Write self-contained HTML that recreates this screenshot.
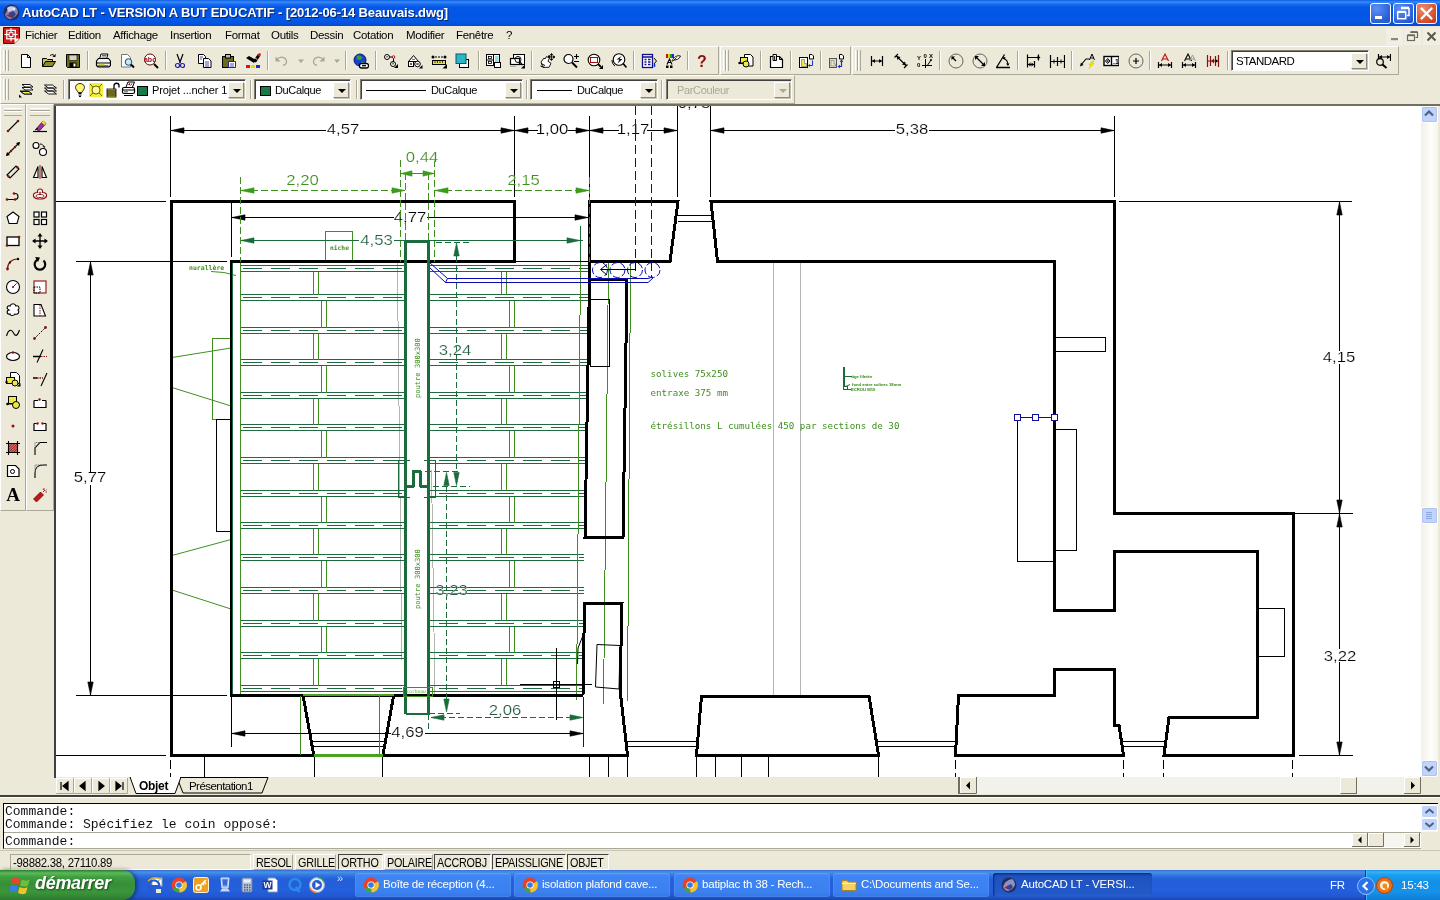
<!DOCTYPE html>
<html lang="fr">
<head>
<meta charset="utf-8">
<title>AutoCAD LT - VERSION A BUT EDUCATIF - [2012-06-14 Beauvais.dwg]</title>
<style>
*{box-sizing:border-box;margin:0;padding:0}
html,body{width:1440px;height:900px;overflow:hidden;background:#ece9d8;font-family:"Liberation Sans",sans-serif;font-size:11px;color:#000}
.abs{position:absolute}
#app{position:relative;width:1440px;height:900px;overflow:hidden;background:#ece9d8;will-change:transform}
/* title bar */
#title{left:0;top:0;width:1440px;height:26px;background:linear-gradient(#0a5fe8 0,#3c8af2 2px,#1b6cf0 4px,#0458e8 7px,#0355e5 14px,#0458e6 20px,#0455df 23px,#0349cc 26px)}
#title .txt{left:22px;top:5px;color:#fff;font-weight:bold;font-size:13px;letter-spacing:-0.13px;white-space:nowrap;text-shadow:1px 1px 0 #0a246a}
.tb{top:3px;width:21px;height:21px;border:1px solid #fff;border-radius:3px;background:radial-gradient(circle at 30% 25%,#5c91f4,#2b5fd8 70%,#2351c6)}
.tb.close{background:radial-gradient(circle at 30% 25%,#ee8d6e,#d8502c 65%,#b5371a)}
/* menu bar */
#menu{left:0;top:26px;width:1440px;height:20px;background:#ece9d8}
#menu span{position:absolute;top:3px;font-size:11.5px;white-space:nowrap;letter-spacing:-0.32px}
/* toolbars */
.tbar{background:#ece9d8;border-top:1px solid #fff;border-left:1px solid #fff;border-right:1px solid #aca899;border-bottom:1px solid #aca899}
.grip{position:absolute;top:3px;width:3px;bottom:3px;border-left:1px solid #fff;border-right:1px solid #aca899}
.hgrip{position:absolute;left:3px;right:3px;height:3px;border-top:1px solid #fff;border-bottom:1px solid #aca899}
.hgrip:after{content:'';position:absolute;left:0;right:0;top:2px;height:3px;border-top:1px solid #fff;border-bottom:1px solid #aca899}
.sep{position:absolute;top:4px;bottom:4px;width:2px;border-left:1px solid #aca899;border-right:1px solid #fff}
.ico{position:absolute;width:16px;height:16px}
.combo{position:absolute;height:21px;background:#fff;border:1px solid;border-color:#7f7d70 #fff #fff #7f7d70;box-shadow:inset 1px 1px 0 #404040}
.combo .btn{position:absolute;right:1px;top:2px;bottom:1px;width:16px;background:#ece9d8;border:1px solid;border-color:#fff #8d8a7c #8d8a7c #fff;box-shadow:1px 1px 0 #c5c2b2}
.combo .btn:after{content:"";position:absolute;left:4px;top:6px;border:4px solid transparent;border-top:4px solid #000;border-bottom:0}
.combo .t{position:absolute;top:4px;font-size:11px;letter-spacing:-0.35px;white-space:nowrap}
.combo.dis{background:#ece9d8}
.combo.dis .t{color:#aca899}
.combo.dis .btn:after{border-top-color:#aca899}
/* drawing */
#dwgwrap{left:54px;top:104px;width:1368px;height:674px;background:#fff;border-left:2px solid #404040;border-top:2px solid #716f64}
/* scrollbars */
.sb{background:#f4f3ee}
.sbtn{position:absolute;width:16px;height:16px;border:1px solid #fff;border-radius:2px;background:linear-gradient(90deg,#c9d7fb,#b9cbf6);box-shadow:0 0 0 1px #b4c4ee inset}
/* command */
#cmd{left:3px;top:803px;width:1418px;height:46px;background:#fff;border:1px solid #000;border-right:0;border-bottom:1px solid #aca899;font-family:"Liberation Mono",monospace;font-size:13px;line-height:13px;white-space:pre;color:#111}
/* status */
#status{left:0;top:851px;width:1440px;height:19px;background:#ece9d8}
.stbtn{position:absolute;top:3px;height:16px;font-size:13px;padding:1px 0 0 2px;white-space:nowrap;line-height:14px}
.stbtn span{display:inline-block;transform:scaleX(.83);transform-origin:0 0;letter-spacing:-0.3px}
.stbtn.on{border:1px solid;border-color:#404040 #fff #fff #404040}
.stbtn.off{border:1px solid;border-color:#fff #aca899 #aca899 #fff}
/* taskbar */
#task{left:0;top:870px;width:1440px;height:30px;background:linear-gradient(#3168d5 0,#4993e6 2px,#3a80e3 4px,#2a6ade 7px,#245edb 10px,#2460dc 20px,#2258d4 26px,#1c46b0 30px)}
#start{left:0;top:0;width:135px;height:30px;border-radius:0 13px 13px 0;background:linear-gradient(#2e7d2a 0,#5cb85c 3px,#3f9e3f 7px,#368f36 14px,#3a963a 22px,#2e7a2e 30px);box-shadow:2px 0 4px rgba(0,0,0,.45)}
#start .t{left:35px;top:3px;color:#fff;font-weight:bold;font-style:italic;font-size:18px;letter-spacing:-0.3px;text-shadow:1px 1px 2px #1a4d1a}
.tk{position:absolute;top:3px;height:24px;border-radius:3px;background:linear-gradient(#5594f6 0,#3f84f3 3px,#3b80f0 19px,#3577e4 24px);box-shadow:inset 0 0 0 1px rgba(255,255,255,.08);color:#fff;font-size:11.5px;letter-spacing:-0.2px;white-space:nowrap;overflow:hidden}
.tk.act{background:linear-gradient(#1b4bb0 0,#1e52c0 4px,#2258c8 20px,#2560d0 24px);box-shadow:inset 1px 1px 2px rgba(0,0,0,.5)}
.tk .t{position:absolute;left:28px;top:5px}
.tk svg{position:absolute;left:8px;top:4px}
#tray{left:1365px;top:0;width:75px;height:30px;background:linear-gradient(#1a8fe6 0,#3bb0f5 2px,#19a0ef 5px,#1290e8 12px,#1592e9 22px,#0f7cd6 30px);border-left:1px solid #0a3f94;box-shadow:inset 1px 0 0 #3fb7f7;color:#fff}
</style>
</head>
<body>
<div id="app">

<div id="title" class="abs">
<svg class="abs" style="left:3px;top:4px" width="17" height="17" viewBox="0 0 17 17"><circle cx="8.5" cy="8.5" r="8" fill="#2a2a5a"/><path d="M2 11c2-6 5-8 9-9 3 1 4 4 4 7-2 4-6 6-9 6-2-1-3-2-4-4z" fill="#7a86b8"/><path d="M4 4c2-2 5-2 7-1l-2 4-4 1z" fill="#c9d0ea"/><path d="M6 9l4-2 3 3-3 4-4-1z" fill="#3a3f86"/><path d="M3 12l3-2 2 3z" fill="#b0202a"/><circle cx="11" cy="5" r="1.5" fill="#e8ecff"/></svg>
<div class="abs txt">AutoCAD LT - VERSION A BUT EDUCATIF - [2012-06-14 Beauvais.dwg]</div>
<div class="abs tb" style="left:1370px"><svg width="19" height="19" viewBox="0 0 19 19"><rect x="4" y="12" width="7" height="3" fill="#fff"/></svg></div>
<div class="abs tb" style="left:1393px"><svg width="19" height="19" viewBox="0 0 19 19"><path d="M7 4.500h8v7h-2" fill="none" stroke="#fff" stroke-width="1.5"/><path d="M7 3.700h8" stroke="#fff" stroke-width="2"/><rect x="3.700" y="8.2" width="8" height="6.5" fill="none" stroke="#fff" stroke-width="1.5"/><path d="M3.700 7.800h8" stroke="#fff" stroke-width="2"/></svg></div>
<div class="abs tb close" style="left:1416px"><svg width="19" height="19" viewBox="0 0 19 19"><path d="M4.5 4.500l10 10M14.5 4.500l-10 10" stroke="#fff" stroke-width="2.3" stroke-linecap="round"/></svg></div>
</div>
<div id="menu" class="abs">
<svg class="abs" style="left:3px;top:1px" width="17" height="17" viewBox="0 0 18 18"><path d="M.5 .5h17v11.500l-5.5 5.500h-11.500z" fill="#d01818" stroke="#300" stroke-width="1"/><path d="M12 18v-6h6z" fill="#fff" stroke="#c81818" stroke-width=".5"/><rect x="4" y="3.5" width="9" height="9" fill="none" stroke="#fff" stroke-width="1.3"/><path d="M8.5 1v14M1.5 8h14" stroke="#fff" stroke-width="1.2"/><rect x="6.5" y="6" width="4" height="4" fill="#c81818" stroke="#fff"/></svg>
<span style="left:25px">Fichier</span>
<span style="left:68px">Edition</span>
<span style="left:113px">Affichage</span>
<span style="left:170px">Insertion</span>
<span style="left:225px">Format</span>
<span style="left:271px">Outils</span>
<span style="left:310px">Dessin</span>
<span style="left:353px">Cotation</span>
<span style="left:406px">Modifier</span>
<span style="left:456px">Fenêtre</span>
<span style="left:506px">?</span>
<svg class="abs" style="left:1386px;top:2px" width="54" height="17" viewBox="0 0 54 17"><rect x="0" y="0" width="17" height="17" fill="#f1efe4"/><rect x="18" y="0" width="17" height="17" fill="#f1efe4"/><rect x="37" y="0" width="17" height="17" fill="#f1efe4"/><rect x="5" y="10" width="7" height="2.2" fill="#8a8878"/><path d="M24.5 4.500h7v5h-2" fill="none" stroke="#6a6858" stroke-width="1.2"/><path d="M24.5 4h7" stroke="#6a6858" stroke-width="1.8"/><rect x="21.5" y="7.5" width="7" height="5" fill="#f1efe4" stroke="#6a6858" stroke-width="1.2"/><path d="M21.5 7.200h7" stroke="#6a6858" stroke-width="1.8"/><path d="M41.5 4.500l8 8M49.5 4.500l-8 8" stroke="#5a5848" stroke-width="2.1"/></svg>
</div>
<div class="abs tbar" style="left:0px;top:46px;width:719px;height:29px"><div class="grip" style="left:2px"></div><div class="grip" style="left:5px"></div><svg class="ico" style="left:17px;top:6px" viewBox="0 0 16 16"><path d="M3.5 1.5h6l3 3v10h-9z" fill="#fff" stroke="#000"/><path d="M9.5 1.5v3h3" fill="none" stroke="#000"/></svg><svg class="ico" style="left:40px;top:6px" viewBox="0 0 16 16"><path d="M1.5 13.5v-8h4l1 1h5v2" fill="#c9c36a" stroke="#000"/><path d="M1.5 13.5l3-5h10l-3 5z" fill="#8e8a28" stroke="#000"/><path d="M9 2.5c2-1.5 4-1 5 1m0 0l-2.2-.2m2.2.2l.3-2.2" fill="none" stroke="#000"/></svg><svg class="ico" style="left:64px;top:6px" viewBox="0 0 16 16"><path d="M1.5 1.5h13v13h-12l-1-1z" fill="#6e6a1a" stroke="#000"/><rect x="4" y="2" width="8" height="5.5" fill="#d4d2c0" stroke="#000" stroke-width=".6"/><rect x="4.5" y="9.5" width="7" height="5" fill="#000"/><rect x="8.5" y="10.5" width="2" height="3" fill="#fff"/></svg><svg class="ico" style="left:94px;top:6px" viewBox="0 0 16 16"><path d="M4.5 6l1.5-5h7l-1.5 5" fill="#fff" stroke="#000"/><path d="M1.5 8l2-2.500h10l2 2.500v4.500l-1.5 1.500h-11l-1.5-1.500z" fill="#f4f4f4" stroke="#000" stroke-width="1.2"/><path d="M1.5 10h14M3 13h10.5" stroke="#000" stroke-width="1.1"/><rect x="3.5" y="10.8" width="6" height="1.400" fill="#d6d13a"/><path d="M7 2.500h4.500M6.5 4h4.5" stroke="#444" stroke-width=".8"/></svg><svg class="ico" style="left:118px;top:6px" viewBox="0 0 16 16"><path d="M2.5 1.500h6l3 3v9.500h-9z" fill="#fff" stroke="#777"/><circle cx="9.5" cy="9" r="3.3" fill="#bfeaf2" stroke="#1a4a7a"/><path d="M12 11.500l3 3" stroke="#000" stroke-width="2"/></svg><svg class="ico" style="left:142px;top:6px" viewBox="0 0 16 16"><circle cx="7" cy="6.5" r="5.5" fill="#fff" stroke="#5a1010"/><text x="7" y="9" font-size="7" font-weight="bold" text-anchor="middle" fill="#a01010" font-family="Liberation Sans">abc</text><path d="M11 11l4 4" stroke="#000" stroke-width="2"/></svg><svg class="ico" style="left:171px;top:6px" viewBox="0 0 16 16"><path d="M5 1l3 8M11 1l-3 8" stroke="#000" stroke-width="1.2" fill="none"/><circle cx="5.5" cy="12.5" r="2" fill="none" stroke="#2020a0" stroke-width="1.2"/><circle cx="10.5" cy="12.5" r="2" fill="none" stroke="#2020a0" stroke-width="1.2"/><path d="M8 9l-1.5 2M8 9l1.5 2" stroke="#2020a0"/></svg><svg class="ico" style="left:196px;top:6px" viewBox="0 0 16 16"><path d="M1.5 1.500h5l2 2v7h-7z" fill="#fff" stroke="#000"/><path d="M6.5 5.500h5l2.5 2.500v6.500h-7.500z" fill="#fff" stroke="#000"/><path d="M8 9h4M8 11h4M8 13h4M3 4h3M3 6h2" stroke="#2020a0" stroke-width=".8"/></svg><svg class="ico" style="left:220px;top:6px" viewBox="0 0 16 16"><rect x="1.5" y="3.5" width="11" height="11" fill="#6e6a1a" stroke="#000"/><rect x="4.5" y="1.5" width="5" height="3.5" fill="#bbb" stroke="#000"/><path d="M7.5 8.500h7v6h-7z" fill="#fff" stroke="#2020a0"/><path d="M9 11h4M9 13h4" stroke="#2020a0" stroke-width=".8"/></svg><svg class="ico" style="left:244px;top:6px" viewBox="0 0 16 16"><path d="M1 5l8 5 2-3-7-4z" fill="#000"/><path d="M8 8l5-7 2.5 1.5-4.5 7z" fill="#000"/><path d="M12 2l2.5-2 1.5 1-1.5 3z" fill="#d01010"/><path d="M10 5l2.5 1.5" stroke="#fff" stroke-width=".8"/><rect x="1" y="12" width="4" height="3" fill="#e01010"/><rect x="6" y="12" width="4" height="3" fill="#e6d800"/><rect x="11" y="12" width="4" height="3" fill="#1030d0"/></svg><svg class="ico" style="left:273px;top:6px" viewBox="0 0 16 16"><path d="M3 6.500c3-3.5 9-3 9.5 2 0 2-1.5 3.5-3.5 3.5" fill="none" stroke="#a9a694" stroke-width="1.3"/><path d="M1.5 3.500v5h5z" fill="#a9a694"/></svg><svg class="ico" style="left:292px;top:6px" viewBox="0 0 16 16"><path d="M5 6.500h6l-3 3.500z" fill="#a9a694"/></svg><svg class="ico" style="left:309px;top:6px" viewBox="0 0 16 16"><path d="M13 6.500c-3-3.5-9-3-9.5 2 0 2 1.5 3.5 3.5 3.5" fill="none" stroke="#a9a694" stroke-width="1.3"/><path d="M14.5 3.500v5h-5z" fill="#a9a694"/></svg><svg class="ico" style="left:328px;top:6px" viewBox="0 0 16 16"><path d="M5 6.500h6l-3 3.500z" fill="#a9a694"/></svg><svg class="ico" style="left:352px;top:6px" viewBox="0 0 16 16"><circle cx="7" cy="7" r="6" fill="#1a3fd0" stroke="#0a1a70"/><path d="M4 3c2-1 4 0 5 1s-1 3-3 3-3-2-2-4zM8 9c2-1 4 0 3 2s-3 2-3-2z" fill="#2aa52a"/><rect x="6.5" y="10.5" width="9" height="4.5" rx="2" fill="#fff" stroke="#000" stroke-width="1.3"/><path d="M9 12.700h4" stroke="#000" stroke-width="1.3"/></svg><svg class="ico" style="left:382px;top:6px" viewBox="0 0 16 16"><circle cx="4" cy="4" r="2.5" fill="#fff" stroke="#000"/><circle cx="10" cy="11" r="2.5" fill="#fff" stroke="#000"/><path d="M6.5 4h4v4.5" fill="none" stroke="#000"/><circle cx="10.5" cy="4" r="1.3" fill="#fff" stroke="#a01010"/><path d="M4 3v1.500M10 9.500v2" stroke="#000"/><path d="M15 11v4h-4z" fill="#000"/></svg><svg class="ico" style="left:406px;top:6px" viewBox="0 0 16 16"><path d="M1.5 8.500l5-6 5 6z" fill="#fff" stroke="#000"/><rect x="1.5" y="8.5" width="5" height="5" fill="#fff" stroke="#000"/><circle cx="10.5" cy="11" r="2.8" fill="#fff" stroke="#000"/><path d="M3 11h2M4 10v2M9.5 10l2 2M11.5 10l-2 2M5 5.500l1.5 1.5 1.5-1.5" stroke="#000" stroke-width=".8" fill="none"/><path d="M15.5 12v3.500h-3.500z" fill="#000"/></svg><svg class="ico" style="left:430px;top:6px" viewBox="0 0 16 16"><path d="M1 4h12" stroke="#000" stroke-dasharray="2 1"/><circle cx="2" cy="4" r="1.5" fill="#000"/><circle cx="14" cy="4" r="1.5" fill="#000"/><rect x="1.5" y="7.5" width="13" height="4" fill="#e6df3a" stroke="#000"/><path d="M4 8v2M6.5 8v2M9 8v2M11.5 8v2" stroke="#000" stroke-width=".7"/><path d="M16 11v4.500h-4.500z" fill="#000"/></svg><svg class="ico" style="left:454px;top:6px" viewBox="0 0 16 16"><rect x="4.5" y="6.5" width="9" height="8" fill="#fff" stroke="#000"/><rect x="1" y="1" width="10" height="9.5" fill="#2ab8c8" stroke="#0a5a66" stroke-width="1"/></svg><svg class="ico" style="left:484px;top:6px" viewBox="0 0 16 16"><rect x="1.5" y="1.5" width="13" height="11" fill="#fff" stroke="#000"/><path d="M8.5 1.5v11M1.5 7h7" stroke="#000"/><rect x="3.5" y="3.5" width="3" height="2" fill="none" stroke="#000" stroke-width=".8"/><rect x="3.5" y="8.5" width="3" height="2" fill="none" stroke="#000" stroke-width=".8"/><rect x="10" y="3" width="3.5" height="6" fill="#8fe0e8"/><rect x="9.5" y="9.5" width="6" height="5" fill="#fff" stroke="#000"/></svg><svg class="ico" style="left:508px;top:6px" viewBox="0 0 16 16"><rect x="4.5" y="1.5" width="11" height="10" fill="#fff" stroke="#000"/><rect x="1.5" y="5.5" width="9" height="6" fill="#fff" stroke="#000" stroke-width="1.2"/><circle cx="9" cy="6.5" r="3" fill="none" stroke="#000"/><path d="M11 9l2.5 3" stroke="#000" stroke-width="1.3"/><path d="M1 13.500h6" stroke="#aaa"/><path d="M16 11.500v4h-4z" fill="#000"/></svg><svg class="ico" style="left:538px;top:6px" viewBox="0 0 16 16"><path d="M2 9l3-4 1 1 1.5-2.5 1 .8 1.5-2 1 1-2 5 3 2-2 4h-6z" fill="#fff" stroke="#000" stroke-width=".9"/><path d="M2 10.500l4 2M1.5 13l4 1.5" stroke="#000"/><path d="M12.5 1v6M9.5 4h6M12.5 .5l-1.200 1.500h2.400zM12.5 7.500l-1.200-1.500h2.400zM9 4l1.5-1.200v2.400zM16 4l-1.5-1.200v2.400z" stroke="#000" stroke-width=".8" fill="#000"/></svg><svg class="ico" style="left:562px;top:6px" viewBox="0 0 16 16"><circle cx="5.5" cy="6" r="4.5" fill="#fff" stroke="#000" stroke-width="1.2"/><path d="M9 9.500l5 5" stroke="#000" stroke-width="2"/><path d="M11 3.500h5M13.5 1v5M11 8.500h5" stroke="#000" stroke-width="1.1"/></svg><svg class="ico" style="left:586px;top:6px" viewBox="0 0 16 16"><circle cx="7" cy="7" r="5.8" fill="#fff" stroke="#000" stroke-width="1.1"/><rect x="3.5" y="4.5" width="7" height="5" fill="none" stroke="#a01010"/><path d="M11 11l3 3" stroke="#000" stroke-width="1.8"/><path d="M16 12v4h-4z" fill="#000"/></svg><svg class="ico" style="left:610px;top:6px" viewBox="0 0 16 16"><circle cx="8" cy="6.5" r="5.8" fill="#fff" stroke="#000" stroke-width="1.1"/><path d="M10.5 3l-5 3.500h3l-2 4 5-4.500h-3z" fill="#000"/><path d="M12 10.500l3.5 4" stroke="#000" stroke-width="1.8"/><path d="M1 7c0 3 1.5 5 3 6" fill="none" stroke="#000"/></svg><svg class="ico" style="left:640px;top:6px" viewBox="0 0 16 16"><rect x="1.5" y="1.5" width="10" height="13" fill="#fff" stroke="#10108a" stroke-width="1.3"/><path d="M1.5 4h10" stroke="#10108a" stroke-width="1.5"/><path d="M3.5 6.500h2M7 6.500h2.500M3.5 9h2M7 9h2.500M3.5 11.500h2M7 11.500h2.5" stroke="#10108a" stroke-width="1.5"/><path d="M13 5l2.5 3-2.5 3" fill="none" stroke="#000"/><path d="M13.5 11v3" stroke="#1030d0" stroke-width="1.5"/></svg><svg class="ico" style="left:664px;top:6px" viewBox="0 0 16 16"><rect x="1" y="1" width="2" height="4" fill="#d01010"/><rect x="3" y="1" width="2" height="4" fill="#e0d000"/><rect x="5" y="1" width="2" height="4" fill="#10a010"/><rect x="7" y="1" width="2" height="4" fill="#1030d0"/><path d="M2 11.500l2.5-5.5 2.5 5.500M3 9.500h3" fill="none" stroke="#000" stroke-width="1.1"/><rect x="1" y="12.5" width="2.5" height="2.5" fill="#000"/><rect x="5" y="12.5" width="2.5" height="2.5" fill="#000"/><path d="M7 8c2-4 5-6 8.5-5-1 3-4 4-6.5 4" fill="#fff" stroke="#000" stroke-width=".9"/><path d="M7.5 8.500l4-4" stroke="#000" stroke-width=".8"/></svg><svg class="ico" style="left:693px;top:6px" viewBox="0 0 16 16"><text x="8" y="14" font-size="16" font-weight="bold" text-anchor="middle" fill="#8a1010" font-family="Liberation Sans">?</text></svg><div class="sep" style="left:86px"></div><div class="sep" style="left:164px"></div><div class="sep" style="left:266px"></div><div class="sep" style="left:344px"></div><div class="sep" style="left:374px"></div><div class="sep" style="left:477px"></div><div class="sep" style="left:530px"></div><div class="sep" style="left:632px"></div><div class="sep" style="left:686px"></div></div>
<div class="abs tbar" style="left:720px;top:46px;width:131px;height:29px"><div class="grip" style="left:2px"></div><div class="grip" style="left:5px"></div><svg class="ico" style="left:17px;top:6px" viewBox="0 0 16 16"><path d="M6.5 1.500h6l2.5 2.500v9h-8.500z" fill="#fff" stroke="#000"/><rect x="2.5" y="4.5" width="7" height="6" fill="#ece84a" stroke="#000"/><circle cx="8" cy="11" r="3" fill="#ece84a" stroke="#000"/><circle cx="1.5" cy="10" r="1.2" fill="#000"/><path d="M1.5 10h4" stroke="#000"/></svg><svg class="ico" style="left:48px;top:6px" viewBox="0 0 16 16"><path d="M1.5 3.500h9l3 3v8h-12z" fill="#fff" stroke="#000" stroke-width="1.2"/><path d="M4 1.500h3.500v6h-3.500z M5.700 3v4" fill="#fff" stroke="#000"/><path d="M10.5 3.500v3h3" fill="none" stroke="#000"/></svg><svg class="ico" style="left:77px;top:6px" viewBox="0 0 16 16"><rect x="1.5" y="4.5" width="8" height="10" fill="#fff" stroke="#000"/><path d="M3.5 6.500h3v4h2v3h-5z" fill="#ece84a" stroke="#777" stroke-width=".7"/><path d="M11.5 1.500h2.500l1.5 1.500v3h-4z" fill="#fff" stroke="#000"/><path d="M14.5 7.500v5h-3" fill="none" stroke="#1030d0"/><path d="M10 12.500l2-1.500v3z" fill="#1030d0"/></svg><svg class="ico" style="left:107px;top:6px" viewBox="0 0 16 16"><rect x="1.5" y="5.5" width="7" height="9" fill="#ddd" stroke="#555"/><path d="M3 7.500h3v3.500h1.500v2h-4.500z" fill="#e8e6b0" stroke="#888" stroke-width=".7"/><path d="M11.5 1.500h2.500l1.5 1.500v3h-4z" fill="#fff" stroke="#000"/><path d="M13.5 7v6.500M10 13.500h4" stroke="#1030d0" stroke-width="1.2"/><path d="M13.5 6.500l-1.700 2.500h3.400zM9.5 13.500l2.5-1.700v3.400z" fill="#1030d0"/></svg><div class="sep" style="left:39px"></div><div class="sep" style="left:69px"></div><div class="sep" style="left:99px"></div></div>
<div class="abs tbar" style="left:852px;top:46px;width:547px;height:29px"><div class="grip" style="left:2px"></div><div class="grip" style="left:5px"></div><svg class="ico" style="left:16px;top:6px" viewBox="0 0 16 16"><path d="M2.5 3v10M13.5 3v10M2.5 8h11" stroke="#000" stroke-width="1.2"/><path d="M3 8l3-2v4zM13 8l-3-2v4z" fill="#000"/></svg><svg class="ico" style="left:40px;top:6px" viewBox="0 0 16 16"><path d="M1.5 4.500l3.5-3.500M11 15l3.5-3.500M3.5 3l9.5 9.5" stroke="#000" stroke-width="1.1"/><path d="M3.5 3l4 1-3 3zM13 12.500l-4-1 3-3z" fill="#000"/></svg><svg class="ico" style="left:64px;top:6px" viewBox="0 0 16 16"><text x="0" y="7" font-size="6" font-weight="bold" font-family="Liberation Sans">Y</text><text x="0" y="14" font-size="6" font-weight="bold" font-family="Liberation Sans">0</text><text x="6.5" y="5" font-size="6" font-weight="bold" font-family="Liberation Sans">0</text><text x="12" y="5" font-size="6" font-weight="bold" font-family="Liberation Sans">X</text><path d="M5 12.500h10M8.5 6v9M14 7l-4 6" stroke="#000" fill="none"/><circle cx="14" cy="7" r="1" fill="#000"/></svg><svg class="ico" style="left:95px;top:6px" viewBox="0 0 16 16"><circle cx="8" cy="8" r="7" fill="none" stroke="#555" stroke-width=".9"/><path d="M8 8l-4-4" stroke="#000" stroke-width="1.2"/><path d="M3.5 3.500h3.500l-3.5 3.500z" fill="#000"/></svg><svg class="ico" style="left:119px;top:6px" viewBox="0 0 16 16"><circle cx="8" cy="8" r="7" fill="none" stroke="#555" stroke-width=".9"/><path d="M4 4l8 8" stroke="#000" stroke-width="1.3"/><path d="M3 3h4l-4 4zM13 13h-4l4-4z" fill="#000"/></svg><svg class="ico" style="left:142px;top:6px" viewBox="0 0 16 16"><path d="M1 14.500h14M1.5 14.500l8-13" stroke="#000" stroke-width="1.3" fill="none"/><path d="M8 5c3 1 5 4 5 7" fill="none" stroke="#000" stroke-width="1.1"/><path d="M7 4.500l3.5-.5-1 3zM13 13l-2-2.500h3.500z" fill="#000"/></svg><svg class="ico" style="left:172px;top:6px" viewBox="0 0 16 16"><path d="M2.5 1.500v13M13.5 1.500v6M9.5 8v6.500M2.5 4.500h11M2.5 11.500h7" stroke="#000" stroke-width="1.2"/><path d="M15.5 4.500l-3-2v4zM3 11.500l2.5-2v4zM9 11.500l-2.5-2v4z" fill="#000"/></svg><svg class="ico" style="left:196px;top:6px" viewBox="0 0 16 16"><path d="M1.5 2v13M8.5 4v9M15.5 2v13M1.5 8.500h14" stroke="#000" stroke-width="1.2"/><path d="M5 6.500v4M12 6.500v4" stroke="#000"/></svg><svg class="ico" style="left:226px;top:6px" viewBox="0 0 16 16"><path d="M2 12l5-6h3.5" fill="none" stroke="#000" stroke-width="1.1"/><path d="M1 13.500l1-4 2.5 2.500z" fill="#000"/><path d="M10.5 7l2.5-6 2.5 6M11.5 5h3" fill="none" stroke="#000"/><path d="M13 8l-3 4h2l-2 3.5 5-5h-2l2-2.500z" fill="#f0e800" stroke="#c8b400" stroke-width=".4"/></svg><svg class="ico" style="left:250px;top:6px" viewBox="0 0 16 16"><rect x="1" y="3.5" width="15" height="9" fill="#fff" stroke="#000" stroke-width="1.400"/><path d="M8.5 3.500v9" stroke="#000" stroke-width="1.400"/><path d="M4.700 5.500l2.300 2.5-2.300 2.5-2.300-2.500z" fill="none" stroke="#000"/><path d="M4.700 6.500v3M3.5 8h2.5" stroke="#000" stroke-width=".7"/><text x="10" y="11" font-size="7" font-weight="bold" font-family="Liberation Sans">.1</text></svg><svg class="ico" style="left:275px;top:6px" viewBox="0 0 16 16"><circle cx="8" cy="8" r="7" fill="none" stroke="#555" stroke-width=".9"/><path d="M5 8h6M8 5v6" stroke="#000" stroke-width="1.2"/></svg><svg class="ico" style="left:304px;top:6px" viewBox="0 0 16 16"><path d="M4.5 8l3.5-7 3.5 7M5.5 6h5" fill="none" stroke="#c01010" stroke-width="1.1"/><path d="M1.5 9v6M14.5 9v6M1.5 12h13" stroke="#000" stroke-width="1.2"/><path d="M2 12l3-2v4zM14 12l-3-2v4z" fill="#000"/></svg><svg class="ico" style="left:328px;top:6px" viewBox="0 0 16 16"><path d="M3.5 8l3.5-7 3.5 7M4.5 6h5" fill="none" stroke="#000" stroke-width="1.1"/><path d="M8.5 8l3-6 3 6M9.5 6h4" fill="none" stroke="#999" stroke-width="1"/><path d="M1.5 9v6M14.5 9v6M1.5 12h13" stroke="#000" stroke-width="1.2"/><path d="M2 12l3-2v4zM14 12l-3-2v4z" fill="#000"/></svg><svg class="ico" style="left:352px;top:6px" viewBox="0 0 16 16"><path d="M2.5 2v12M13.5 2v12M5.5 3v10M10.5 3v10M2.5 8h11" stroke="#8a1010" stroke-width="1.2"/><path d="M6 8l3-2.500v5z" fill="#8a1010"/><path d="M13 8l-2.5-2v4z" fill="#000"/></svg><svg class="ico" style="left:522px;top:6px" viewBox="0 0 16 16"><path d="M3.5 1v7M15.5 1v7M3.5 4h12" stroke="#000" stroke-width="1.2"/><path d="M4 4l3-2v4zM15 4l-3-2v4z" fill="#000"/><circle cx="5" cy="9" r="3.3" fill="#ece9d8" stroke="#000" stroke-width="1.2"/><path d="M7.5 11.500l4 3.5" stroke="#000" stroke-width="2"/></svg><div class="sep" style="left:86px"></div><div class="sep" style="left:164px"></div><div class="sep" style="left:218px"></div><div class="sep" style="left:296px"></div><div class="sep" style="left:374px"></div><div class="combo" style="left:378px;top:3px;width:138px"><span class="t" style="left:4px;font-size:11.5px;letter-spacing:-.5px">STANDARD</span><div class="btn"></div></div></div>
<div class="abs tbar" style="left:0px;top:75px;width:795px;height:29px"><div class="grip" style="left:2px"></div><div class="grip" style="left:5px"></div><svg class="ico" style="left:17px;top:6px" viewBox="0 0 16 16"><path d="M4 2.500h8l3 2.500h-8zM4 5.500h8l3 2.500h-8zM2 9h8l4 3h-8z" fill="#fff" stroke="#000" stroke-width=".9"/><path d="M3 9.500h8l3 2.500h-8z" fill="#f0ee5a" stroke="#000" stroke-width=".9"/><path d="M1 12.500v3h3z" fill="#000"/></svg><svg class="ico" style="left:41px;top:6px" viewBox="0 0 16 16"><path d="M2.5 3h8l4 3h-8zM2.5 6h8l4 3h-8zM2.5 9h8l4 3h-8z" fill="#fff" stroke="#000" stroke-width=".9"/></svg><div class="sep" style="left:62px"></div><div class="sep" style="left:249px"></div><div class="sep" style="left:355px"></div><div class="sep" style="left:525px"></div><div class="sep" style="left:660px"></div><div class="combo" style="left:67px;top:3px;width:178px"><svg class="ico" style="left:3px;top:2px" viewBox="0 0 16 16"><path d="M8 1.500c-3 0-4.5 2-4.5 4 0 2 2 3 2.5 5h4c.5-2 2.5-3 2.5-5 0-2-1.5-4-4.5-4z" fill="#fdf56a" stroke="#000" stroke-width=".8"/><path d="M6.5 11.500h3M6.5 13h3M7 14.500h2" stroke="#000"/></svg><svg class="ico" style="left:19px;top:2px" viewBox="0 0 16 16"><rect x="1" y="1" width="14" height="14" fill="#f4ee3a"/><circle cx="8" cy="8" r="4" fill="#fdf9a0" stroke="#6a6a00" stroke-width="1"/><path d="M2 2l3 3M14 2l-3 3M2 14l3-3M14 14l-3-3" stroke="#6a6a00"/></svg><svg class="ico" style="left:36px;top:2px" viewBox="0 0 16 16"><path d="M9 7v-3.500c0-3 5-3 5 0v2" fill="none" stroke="#000" stroke-width="1.3"/><rect x="2" y="7" width="9" height="8" fill="#d8d23a" stroke="#000" stroke-width=".8"/><path d="M2 9h9M2 11h9M2 13h9" stroke="#000" stroke-width="1"/></svg><svg class="ico" style="left:52px;top:1px" viewBox="0 0 16 16"><path d="M5 6l2-5h6.500l-2 5" fill="#fff" stroke="#000"/><path d="M7.5 4l1.5-2M9.5 4.500l1.5-2" stroke="#c01010"/><path d="M8 3l1 1" stroke="#1030d0"/><rect x="1.5" y="6.5" width="12" height="6" rx="1.5" fill="#fff" stroke="#000" stroke-width="1.2"/><path d="M2 9h11.500M3 14.500h9" stroke="#000"/><rect x="3" y="10" width="4" height="1.5" fill="#888"/></svg><div class="abs" style="left:68px;top:6px;width:11px;height:10px;background:#1a7a4a;border:1px solid #000"></div><span class="t" style="left:83px;letter-spacing:-.15px">Projet ...ncher 1</span><div class="btn"></div></div><div class="combo" style="left:253px;top:3px;width:97px"><div class="abs" style="left:5px;top:6px;width:11px;height:10px;background:#1a7a4a;border:1px solid #000"></div><span class="t" style="left:20px">DuCalque</span><div class="btn"></div></div><div class="combo" style="left:359px;top:3px;width:163px"><div class="abs" style="left:5px;top:10px;width:60px;height:1px;background:#000"></div><span class="t" style="left:70px">DuCalque</span><div class="btn"></div></div><div class="combo" style="left:529px;top:3px;width:128px"><div class="abs" style="left:6px;top:10px;width:35px;height:1px;background:#000"></div><span class="t" style="left:46px">DuCalque</span><div class="btn"></div></div><div class="combo dis" style="left:665px;top:3px;width:126px"><span class="t" style="left:10px">ParCouleur</span><div class="btn"></div></div></div>
<div class="abs tbar" style="left:0px;top:104px;width:26px;height:407px"><div class="hgrip" style="top:3px"></div><svg class="ico" style="left:4px;top:13px" viewBox="0 0 16 16"><path d="M3 13l10-10" stroke="#000" stroke-width="1.1"/><circle cx="3" cy="13" r="1.3" fill="#8a1010"/><circle cx="13" cy="3" r="1.3" fill="#8a1010"/></svg><svg class="ico" style="left:4px;top:36px" viewBox="0 0 16 16"><path d="M1.5 14.500l13-13" stroke="#000" stroke-width="1.1"/><path d="M1 15l1-4 3 3zM15 1l-1 4-3-3z" fill="#000"/><circle cx="6" cy="10" r="1.2" fill="#8a1010"/><circle cx="10" cy="6" r="1.2" fill="#8a1010"/></svg><svg class="ico" style="left:4px;top:59px" viewBox="0 0 16 16"><path d="M2 11l9-9 3 3-9 9z" fill="none" stroke="#000" stroke-width="1.1"/><circle cx="3.5" cy="12.5" r="1.2" fill="#8a1010"/><circle cx="12.5" cy="3.5" r="1.2" fill="#8a1010"/></svg><svg class="ico" style="left:4px;top:82px" viewBox="0 0 16 16"><path d="M2 12.500h8c4 0 4-6 0-6" fill="none" stroke="#000" stroke-width="1.1"/><circle cx="2" cy="12.5" r="1.3" fill="#8a1010"/><circle cx="10" cy="12.5" r="1.3" fill="#8a1010"/><circle cx="9" cy="6.5" r="1.3" fill="#8a1010"/></svg><svg class="ico" style="left:4px;top:105px" viewBox="0 0 16 16"><path d="M8 2l6 4.5-2 7h-8l-2-7z" fill="#fff" stroke="#000" stroke-width="1.1"/></svg><svg class="ico" style="left:4px;top:128px" viewBox="0 0 16 16"><rect x="2" y="4" width="12" height="8.5" fill="#fff" stroke="#000" stroke-width="1.3"/><circle cx="2" cy="12.5" r="1.3" fill="#8a1010"/><circle cx="14" cy="4" r="1.3" fill="#8a1010"/></svg><svg class="ico" style="left:4px;top:151px" viewBox="0 0 16 16"><path d="M2.5 13c0-6 4-10 10-10" fill="none" stroke="#8a1010" stroke-width="1.2"/><circle cx="2.5" cy="13" r="1.400" fill="#8a1010"/><circle cx="13" cy="3" r="1.2" fill="#000"/><circle cx="5" cy="6.5" r="1" fill="#000"/></svg><svg class="ico" style="left:4px;top:174px" viewBox="0 0 16 16"><circle cx="8" cy="8" r="6.5" fill="#fff" stroke="#000" stroke-width="1.1"/><path d="M8 8l3.5-3.5" stroke="#8a1010"/><circle cx="8" cy="8" r="1.1" fill="#8a1010"/></svg><svg class="ico" style="left:4px;top:197px" viewBox="0 0 16 16"><path d="M4 8c-3-1-2-5 1-4 1-3 5-3 6 0 3-1 4 3 2 4 2 2 0 5-3 4-1 2-5 2-5 0-3 1-4-3-1-4z" fill="#fff" stroke="#000" stroke-width="1.1"/></svg><svg class="ico" style="left:4px;top:220px" viewBox="0 0 16 16"><path d="M1.5 11c2-7 5-7 7-3s4 3 6-3" fill="none" stroke="#000" stroke-width="1.1"/></svg><svg class="ico" style="left:4px;top:243px" viewBox="0 0 16 16"><ellipse cx="8" cy="8.5" rx="6.5" ry="4" fill="#fff" stroke="#000" stroke-width="1.2"/><circle cx="8" cy="4.5" r="1.2" fill="#8a1010"/></svg><svg class="ico" style="left:4px;top:266px" viewBox="0 0 16 16"><path d="M5.5 1.500h6l3 3v8h-9z" fill="#fff" stroke="#000"/><rect x="1.5" y="6.5" width="8" height="6" fill="#ece84a" stroke="#000"/><circle cx="10" cy="12" r="3" fill="#ece84a" stroke="#000"/><path d="M15.5 12v3.500h-3.500z" fill="#000"/><circle cx="1.5" cy="11" r="1.2" fill="#000"/></svg><svg class="ico" style="left:4px;top:289px" viewBox="0 0 16 16"><rect x="3.5" y="2.5" width="8" height="7" fill="#ece84a" stroke="#000"/><circle cx="11" cy="11" r="3.5" fill="#ece84a" stroke="#000"/><circle cx="2.5" cy="10" r="1.3" fill="#000"/><path d="M2.5 10h5" stroke="#000"/></svg><svg class="ico" style="left:4px;top:312px" viewBox="0 0 16 16"><circle cx="8" cy="9" r="1.5" fill="#8a1010"/></svg><svg class="ico" style="left:4px;top:335px" viewBox="0 0 16 16"><rect x="3" y="3" width="10" height="10" fill="#d46a6a" stroke="none"/><path d="M3 13l10-10M3 8l5-5M8 13l5-5M3 10.500l7.5-7.500M5.5 13l7.5-7.5" stroke="#8a1010" stroke-width=".8"/><path d="M1 3.500h14M1 12.500h14M3.5 1v14M12.5 1v14" stroke="#000" stroke-width="1.1"/></svg><svg class="ico" style="left:4px;top:358px" viewBox="0 0 16 16"><path d="M2.5 2.500h8l3.5 3.500v7.500h-11.500z" fill="#fff" stroke="#000" stroke-width="1.2"/><circle cx="7.5" cy="8.5" r="2" fill="#fff" stroke="#000"/></svg><svg class="ico" style="left:4px;top:381px" viewBox="0 0 16 16"><text x="8" y="15" font-size="19" font-weight="bold" text-anchor="middle" fill="#000" font-family="Liberation Serif">A</text></svg></div>
<div class="abs tbar" style="left:26px;top:104px;width:28px;height:407px"><div class="hgrip" style="top:3px"></div><svg class="ico" style="left:5px;top:13px" viewBox="0 0 16 16"><path d="M1 13.500h14" stroke="#000" stroke-width="1.2"/><path d="M4 11l7-8 3 2.5-7 8z" fill="#a030a0" stroke="#000" stroke-width=".6"/><path d="M9.5 4.500l1.5-1.700 3 2.5-1.5 1.700z" fill="#e8e040"/><path d="M3 12l3-1.5" stroke="#000"/></svg><svg class="ico" style="left:5px;top:36px" viewBox="0 0 16 16"><circle cx="4" cy="4.5" r="3" fill="#fff" stroke="#000" stroke-width="1.1"/><circle cx="11" cy="11" r="3.5" fill="#fff" stroke="#000" stroke-width="1.1"/><path d="M8 3c2 0 3.5 1 4 3" fill="none" stroke="#000"/><path d="M12.5 7l-2-1.500h3z" fill="#000"/></svg><svg class="ico" style="left:5px;top:59px" viewBox="0 0 16 16"><path d="M6 2.500v11h-4.500z" fill="#fff" stroke="#000" stroke-width="1.1"/><path d="M10 2.500v11h4.500z" fill="#fff" stroke="#000" stroke-width="1.1"/><path d="M8 1v14" stroke="#8a1010" stroke-width="1"/></svg><svg class="ico" style="left:5px;top:82px" viewBox="0 0 16 16"><path d="M8 2c-2 0-3 1.5-2.5 3.5-3 0-4.5 1.5-4 3.500s2.5 3 6.5 3 6-1 6.5-3-1-3.5-4-3.500c.5-2-.5-3.5-2.5-3.500z" fill="#fff" stroke="#8a1010" stroke-width="1.2"/><path d="M8 5c-1 0-1 1 0 2.5-1.5 0-4 0-4 1.500s2 1.5 4 1.5 4 0 4-1.5-2.5-1.5-4-1.500c1-1.5 1-2.5 0-2.500z" fill="#fff" stroke="#8a1010" stroke-width=".9"/></svg><svg class="ico" style="left:5px;top:105px" viewBox="0 0 16 16"><rect x="2" y="2" width="5" height="5" fill="#fff" stroke="#000" stroke-width="1.2"/><rect x="9.5" y="2" width="5" height="5" fill="#fff" stroke="#000" stroke-width="1.2"/><rect x="2" y="9.5" width="5" height="5" fill="#fff" stroke="#000" stroke-width="1.2"/><rect x="9.5" y="9.5" width="5" height="5" fill="#fff" stroke="#000" stroke-width="1.2"/></svg><svg class="ico" style="left:5px;top:128px" viewBox="0 0 16 16"><path d="M8 1.500v13M1.5 8h13" stroke="#000" stroke-width="1.3"/><path d="M8 0l-2.5 3.500h5zM8 16l-2.5-3.500h5zM0 8l3.5-2.500v5zM16 8l-3.5-2.500v5z" fill="#000"/></svg><svg class="ico" style="left:5px;top:151px" viewBox="0 0 16 16"><path d="M11.5 4.500a5.300 5.300 0 1 1-6 -.8" fill="none" stroke="#000" stroke-width="2.2"/><path d="M3 1l5 .5-2 4.500z" fill="#000"/></svg><svg class="ico" style="left:5px;top:174px" viewBox="0 0 16 16"><rect x="2" y="2" width="12" height="12" fill="#fff" stroke="#8a1010" stroke-width="1.1"/><rect x="2" y="8" width="6" height="6" fill="none" stroke="#000" stroke-dasharray="1.5 1"/></svg><svg class="ico" style="left:5px;top:197px" viewBox="0 0 16 16"><path d="M2 14v-11.500h7l4.5 11.500z" fill="#fff" stroke="#000" stroke-width="1.1"/><path d="M8 3v11" stroke="#8a1010" stroke-dasharray="1.5 1"/></svg><svg class="ico" style="left:5px;top:220px" viewBox="0 0 16 16"><path d="M2 14l11.5-11.5" stroke="#000" stroke-dasharray="2 1.3"/><circle cx="2.5" cy="13.5" r="1.400" fill="#8a1010"/><circle cx="13.5" cy="2.5" r="1.400" fill="#8a1010"/></svg><svg class="ico" style="left:5px;top:243px" viewBox="0 0 16 16"><path d="M1 8.500h8" stroke="#000" stroke-width="1.5"/><path d="M9 8.500h6" stroke="#8a1010" stroke-dasharray="1.5 1" stroke-width="1.2"/><path d="M5 14.500l6-13" stroke="#000" stroke-width="1.1"/></svg><svg class="ico" style="left:5px;top:266px" viewBox="0 0 16 16"><path d="M1 7h4" stroke="#000" stroke-width="1.5"/><path d="M5 7h6" stroke="#8a1010" stroke-dasharray="1.5 1" stroke-width="1.5"/><path d="M9 15l6-13" stroke="#000" stroke-width="1.1"/></svg><svg class="ico" style="left:5px;top:289px" viewBox="0 0 16 16"><path d="M2 6.500v7h12v-7M2 6.500h4M10 6.500h4" fill="#fff" stroke="#000" stroke-width="1.2"/><circle cx="7.5" cy="5.5" r="1.2" fill="#8a1010"/></svg><svg class="ico" style="left:5px;top:312px" viewBox="0 0 16 16"><path d="M2 6.500v7h12v-7M2 6.500h2.500M11.5 6.500h2.5" fill="#fff" stroke="#000" stroke-width="1.2"/><circle cx="5.5" cy="6.5" r="1.2" fill="#8a1010"/><circle cx="10.5" cy="6.5" r="1.2" fill="#8a1010"/></svg><svg class="ico" style="left:5px;top:335px" viewBox="0 0 16 16"><path d="M3 15v-7l5-5.500h7" fill="none" stroke="#000" stroke-width="1.1"/><path d="M3 8v-5.500h5" fill="none" stroke="#666" stroke-dasharray="1.200 1"/></svg><svg class="ico" style="left:5px;top:358px" viewBox="0 0 16 16"><path d="M3 15v-5c0-5 3-8 8-8h4" fill="none" stroke="#000" stroke-width="1.1"/><path d="M3 8v-6h6" fill="none" stroke="#666" stroke-dasharray="1.200 1"/></svg><svg class="ico" style="left:5px;top:381px" viewBox="0 0 16 16"><path d="M1.5 13l7-7 3 3-7 7z" fill="#c01818" stroke="#600" stroke-width=".7"/><path d="M11 6l2-2M12 2v1.500M14.5 3.500l-1 1M15 6h-1.500M11 3l.5 1" stroke="#8a1010" stroke-width=".9"/></svg></div>
<div id="dwgwrap" class="abs"></div><div class="abs" style="left:54px;top:104px;width:1386px;height:2px;background:#716f64"></div>
<div class="abs" style="left:56px;top:106px;width:1364px;height:671px;overflow:hidden;will-change:transform">
<svg id="dwg" width="1364" height="671" viewBox="56 106 1364 671" shape-rendering="crispEdges" font-family="'Liberation Sans', sans-serif">
<line x1="773.5" y1="262" x2="773.5" y2="696" stroke="#b4b4b4" stroke-width="1"/>
<line x1="800.5" y1="262" x2="800.5" y2="696" stroke="#b4b4b4" stroke-width="1"/>
<polyline points="397.5,262 397.5,300 398.5,340 399.5,470 400.5,520 401.5,660" fill="none" stroke="#b4b4b4" stroke-width="1"/>
<line x1="431.5" y1="470" x2="435" y2="696" stroke="#b4b4b4" stroke-width="1"/>
<line x1="240" y1="265.5" x2="404" y2="265.5" stroke="#1b6b3c" stroke-width="1"/>
<line x1="240" y1="271.5" x2="404" y2="271.5" stroke="#1b6b3c" stroke-width="1"/>
<line x1="240" y1="268.5" x2="404" y2="268.5" stroke="#1b6b3c" stroke-width="1" stroke-dasharray="19 9" stroke-dashoffset="24.7"/>
<line x1="430" y1="265.5" x2="588" y2="265.5" stroke="#1b6b3c" stroke-width="1"/>
<line x1="430" y1="271.5" x2="588" y2="271.5" stroke="#1b6b3c" stroke-width="1"/>
<line x1="430" y1="268.5" x2="588" y2="268.5" stroke="#1b6b3c" stroke-width="1" stroke-dasharray="19 9" stroke-dashoffset="18.7"/>
<line x1="240" y1="294.5" x2="404" y2="294.5" stroke="#1b6b3c" stroke-width="1"/>
<line x1="240" y1="300.5" x2="404" y2="300.5" stroke="#1b6b3c" stroke-width="1"/>
<line x1="240" y1="297.5" x2="404" y2="297.5" stroke="#1b6b3c" stroke-width="1" stroke-dasharray="19 9" stroke-dashoffset="24.7"/>
<line x1="430" y1="294.5" x2="588" y2="294.5" stroke="#1b6b3c" stroke-width="1"/>
<line x1="430" y1="300.5" x2="588" y2="300.5" stroke="#1b6b3c" stroke-width="1"/>
<line x1="430" y1="297.5" x2="588" y2="297.5" stroke="#1b6b3c" stroke-width="1" stroke-dasharray="19 9" stroke-dashoffset="18.7"/>
<line x1="240" y1="327.5" x2="404" y2="327.5" stroke="#1b6b3c" stroke-width="1"/>
<line x1="240" y1="333.5" x2="404" y2="333.5" stroke="#1b6b3c" stroke-width="1"/>
<line x1="240" y1="330.5" x2="404" y2="330.5" stroke="#1b6b3c" stroke-width="1" stroke-dasharray="19 9" stroke-dashoffset="24.7"/>
<line x1="430" y1="327.5" x2="587" y2="327.5" stroke="#1b6b3c" stroke-width="1"/>
<line x1="430" y1="333.5" x2="587" y2="333.5" stroke="#1b6b3c" stroke-width="1"/>
<line x1="430" y1="330.5" x2="587" y2="330.5" stroke="#1b6b3c" stroke-width="1" stroke-dasharray="19 9" stroke-dashoffset="18.7"/>
<line x1="240" y1="359.5" x2="404" y2="359.5" stroke="#1b6b3c" stroke-width="1"/>
<line x1="240" y1="365.5" x2="404" y2="365.5" stroke="#1b6b3c" stroke-width="1"/>
<line x1="240" y1="362.5" x2="404" y2="362.5" stroke="#1b6b3c" stroke-width="1" stroke-dasharray="19 9" stroke-dashoffset="24.7"/>
<line x1="430" y1="359.5" x2="587" y2="359.5" stroke="#1b6b3c" stroke-width="1"/>
<line x1="430" y1="365.5" x2="587" y2="365.5" stroke="#1b6b3c" stroke-width="1"/>
<line x1="430" y1="362.5" x2="587" y2="362.5" stroke="#1b6b3c" stroke-width="1" stroke-dasharray="19 9" stroke-dashoffset="18.7"/>
<line x1="240" y1="392.5" x2="404" y2="392.5" stroke="#1b6b3c" stroke-width="1"/>
<line x1="240" y1="398.5" x2="404" y2="398.5" stroke="#1b6b3c" stroke-width="1"/>
<line x1="240" y1="395.5" x2="404" y2="395.5" stroke="#1b6b3c" stroke-width="1" stroke-dasharray="19 9" stroke-dashoffset="24.7"/>
<line x1="430" y1="392.5" x2="586" y2="392.5" stroke="#1b6b3c" stroke-width="1"/>
<line x1="430" y1="398.5" x2="586" y2="398.5" stroke="#1b6b3c" stroke-width="1"/>
<line x1="430" y1="395.5" x2="586" y2="395.5" stroke="#1b6b3c" stroke-width="1" stroke-dasharray="19 9" stroke-dashoffset="18.7"/>
<line x1="240" y1="424.5" x2="404" y2="424.5" stroke="#1b6b3c" stroke-width="1"/>
<line x1="240" y1="430.5" x2="404" y2="430.5" stroke="#1b6b3c" stroke-width="1"/>
<line x1="240" y1="427.5" x2="404" y2="427.5" stroke="#1b6b3c" stroke-width="1" stroke-dasharray="19 9" stroke-dashoffset="24.7"/>
<line x1="430" y1="424.5" x2="585" y2="424.5" stroke="#1b6b3c" stroke-width="1"/>
<line x1="430" y1="430.5" x2="585" y2="430.5" stroke="#1b6b3c" stroke-width="1"/>
<line x1="430" y1="427.5" x2="585" y2="427.5" stroke="#1b6b3c" stroke-width="1" stroke-dasharray="19 9" stroke-dashoffset="18.7"/>
<line x1="240" y1="457.5" x2="404" y2="457.5" stroke="#1b6b3c" stroke-width="1"/>
<line x1="240" y1="463.5" x2="404" y2="463.5" stroke="#1b6b3c" stroke-width="1"/>
<line x1="240" y1="460.5" x2="404" y2="460.5" stroke="#1b6b3c" stroke-width="1" stroke-dasharray="19 9" stroke-dashoffset="24.7"/>
<line x1="430" y1="457.5" x2="585" y2="457.5" stroke="#1b6b3c" stroke-width="1"/>
<line x1="430" y1="463.5" x2="585" y2="463.5" stroke="#1b6b3c" stroke-width="1"/>
<line x1="430" y1="460.5" x2="585" y2="460.5" stroke="#1b6b3c" stroke-width="1" stroke-dasharray="19 9" stroke-dashoffset="18.7"/>
<line x1="240" y1="490.5" x2="404" y2="490.5" stroke="#1b6b3c" stroke-width="1"/>
<line x1="240" y1="496.5" x2="404" y2="496.5" stroke="#1b6b3c" stroke-width="1"/>
<line x1="240" y1="493.5" x2="404" y2="493.5" stroke="#1b6b3c" stroke-width="1" stroke-dasharray="19 9" stroke-dashoffset="24.7"/>
<line x1="430" y1="490.5" x2="584" y2="490.5" stroke="#1b6b3c" stroke-width="1"/>
<line x1="430" y1="496.5" x2="584" y2="496.5" stroke="#1b6b3c" stroke-width="1"/>
<line x1="430" y1="493.5" x2="584" y2="493.5" stroke="#1b6b3c" stroke-width="1" stroke-dasharray="19 9" stroke-dashoffset="18.7"/>
<line x1="240" y1="522.5" x2="404" y2="522.5" stroke="#1b6b3c" stroke-width="1"/>
<line x1="240" y1="528.5" x2="404" y2="528.5" stroke="#1b6b3c" stroke-width="1"/>
<line x1="240" y1="525.5" x2="404" y2="525.5" stroke="#1b6b3c" stroke-width="1" stroke-dasharray="19 9" stroke-dashoffset="24.7"/>
<line x1="430" y1="522.5" x2="584" y2="522.5" stroke="#1b6b3c" stroke-width="1"/>
<line x1="430" y1="528.5" x2="584" y2="528.5" stroke="#1b6b3c" stroke-width="1"/>
<line x1="430" y1="525.5" x2="584" y2="525.5" stroke="#1b6b3c" stroke-width="1" stroke-dasharray="19 9" stroke-dashoffset="18.7"/>
<line x1="240" y1="554.5" x2="404" y2="554.5" stroke="#1b6b3c" stroke-width="1"/>
<line x1="240" y1="560.5" x2="404" y2="560.5" stroke="#1b6b3c" stroke-width="1"/>
<line x1="240" y1="557.5" x2="404" y2="557.5" stroke="#1b6b3c" stroke-width="1" stroke-dasharray="19 9" stroke-dashoffset="24.7"/>
<line x1="430" y1="554.5" x2="584" y2="554.5" stroke="#1b6b3c" stroke-width="1"/>
<line x1="430" y1="560.5" x2="584" y2="560.5" stroke="#1b6b3c" stroke-width="1"/>
<line x1="430" y1="557.5" x2="584" y2="557.5" stroke="#1b6b3c" stroke-width="1" stroke-dasharray="19 9" stroke-dashoffset="18.7"/>
<line x1="240" y1="587.5" x2="404" y2="587.5" stroke="#1b6b3c" stroke-width="1"/>
<line x1="240" y1="593.5" x2="404" y2="593.5" stroke="#1b6b3c" stroke-width="1"/>
<line x1="240" y1="590.5" x2="404" y2="590.5" stroke="#1b6b3c" stroke-width="1" stroke-dasharray="19 9" stroke-dashoffset="24.7"/>
<line x1="430" y1="587.5" x2="584" y2="587.5" stroke="#1b6b3c" stroke-width="1"/>
<line x1="430" y1="593.5" x2="584" y2="593.5" stroke="#1b6b3c" stroke-width="1"/>
<line x1="430" y1="590.5" x2="584" y2="590.5" stroke="#1b6b3c" stroke-width="1" stroke-dasharray="19 9" stroke-dashoffset="18.7"/>
<line x1="240" y1="620.5" x2="404" y2="620.5" stroke="#1b6b3c" stroke-width="1"/>
<line x1="240" y1="626.5" x2="404" y2="626.5" stroke="#1b6b3c" stroke-width="1"/>
<line x1="240" y1="623.5" x2="404" y2="623.5" stroke="#1b6b3c" stroke-width="1" stroke-dasharray="19 9" stroke-dashoffset="24.7"/>
<line x1="430" y1="620.5" x2="583" y2="620.5" stroke="#1b6b3c" stroke-width="1"/>
<line x1="430" y1="626.5" x2="583" y2="626.5" stroke="#1b6b3c" stroke-width="1"/>
<line x1="430" y1="623.5" x2="583" y2="623.5" stroke="#1b6b3c" stroke-width="1" stroke-dasharray="19 9" stroke-dashoffset="18.7"/>
<line x1="240" y1="652.5" x2="404" y2="652.5" stroke="#1b6b3c" stroke-width="1"/>
<line x1="240" y1="658.5" x2="404" y2="658.5" stroke="#1b6b3c" stroke-width="1"/>
<line x1="240" y1="655.5" x2="404" y2="655.5" stroke="#1b6b3c" stroke-width="1" stroke-dasharray="19 9" stroke-dashoffset="24.7"/>
<line x1="430" y1="652.5" x2="582" y2="652.5" stroke="#1b6b3c" stroke-width="1"/>
<line x1="430" y1="658.5" x2="582" y2="658.5" stroke="#1b6b3c" stroke-width="1"/>
<line x1="430" y1="655.5" x2="582" y2="655.5" stroke="#1b6b3c" stroke-width="1" stroke-dasharray="19 9" stroke-dashoffset="18.7"/>
<line x1="240" y1="685.5" x2="404" y2="685.5" stroke="#1b6b3c" stroke-width="1"/>
<line x1="240" y1="691.5" x2="404" y2="691.5" stroke="#1b6b3c" stroke-width="1"/>
<line x1="240" y1="688.5" x2="404" y2="688.5" stroke="#1b6b3c" stroke-width="1" stroke-dasharray="19 9" stroke-dashoffset="24.7"/>
<line x1="430" y1="685.5" x2="582" y2="685.5" stroke="#1b6b3c" stroke-width="1"/>
<line x1="430" y1="691.5" x2="582" y2="691.5" stroke="#1b6b3c" stroke-width="1"/>
<line x1="430" y1="688.5" x2="582" y2="688.5" stroke="#1b6b3c" stroke-width="1" stroke-dasharray="19 9" stroke-dashoffset="18.7"/>
<line x1="313.5" y1="271.5" x2="313.5" y2="294.5" stroke="#3f8f1f" stroke-width="1"/>
<line x1="318.5" y1="271.5" x2="318.5" y2="294.5" stroke="#3f8f1f" stroke-width="1"/>
<line x1="501.5" y1="271.5" x2="501.5" y2="294.5" stroke="#3f8f1f" stroke-width="1"/>
<line x1="506.5" y1="271.5" x2="506.5" y2="294.5" stroke="#3f8f1f" stroke-width="1"/>
<line x1="321.5" y1="300.5" x2="321.5" y2="327.5" stroke="#3f8f1f" stroke-width="1"/>
<line x1="326.5" y1="300.5" x2="326.5" y2="327.5" stroke="#3f8f1f" stroke-width="1"/>
<line x1="509.5" y1="300.5" x2="509.5" y2="327.5" stroke="#3f8f1f" stroke-width="1"/>
<line x1="514.5" y1="300.5" x2="514.5" y2="327.5" stroke="#3f8f1f" stroke-width="1"/>
<line x1="313.5" y1="333.5" x2="313.5" y2="359.5" stroke="#3f8f1f" stroke-width="1"/>
<line x1="318.5" y1="333.5" x2="318.5" y2="359.5" stroke="#3f8f1f" stroke-width="1"/>
<line x1="501.5" y1="333.5" x2="501.5" y2="359.5" stroke="#3f8f1f" stroke-width="1"/>
<line x1="506.5" y1="333.5" x2="506.5" y2="359.5" stroke="#3f8f1f" stroke-width="1"/>
<line x1="321.5" y1="365.5" x2="321.5" y2="392.5" stroke="#3f8f1f" stroke-width="1"/>
<line x1="326.5" y1="365.5" x2="326.5" y2="392.5" stroke="#3f8f1f" stroke-width="1"/>
<line x1="509.5" y1="365.5" x2="509.5" y2="392.5" stroke="#3f8f1f" stroke-width="1"/>
<line x1="514.5" y1="365.5" x2="514.5" y2="392.5" stroke="#3f8f1f" stroke-width="1"/>
<line x1="313.5" y1="398.5" x2="313.5" y2="424.5" stroke="#3f8f1f" stroke-width="1"/>
<line x1="318.5" y1="398.5" x2="318.5" y2="424.5" stroke="#3f8f1f" stroke-width="1"/>
<line x1="501.5" y1="398.5" x2="501.5" y2="424.5" stroke="#3f8f1f" stroke-width="1"/>
<line x1="506.5" y1="398.5" x2="506.5" y2="424.5" stroke="#3f8f1f" stroke-width="1"/>
<line x1="321.5" y1="430.5" x2="321.5" y2="457.5" stroke="#3f8f1f" stroke-width="1"/>
<line x1="326.5" y1="430.5" x2="326.5" y2="457.5" stroke="#3f8f1f" stroke-width="1"/>
<line x1="509.5" y1="430.5" x2="509.5" y2="457.5" stroke="#3f8f1f" stroke-width="1"/>
<line x1="514.5" y1="430.5" x2="514.5" y2="457.5" stroke="#3f8f1f" stroke-width="1"/>
<line x1="313.5" y1="463.5" x2="313.5" y2="490.5" stroke="#3f8f1f" stroke-width="1"/>
<line x1="318.5" y1="463.5" x2="318.5" y2="490.5" stroke="#3f8f1f" stroke-width="1"/>
<line x1="501.5" y1="463.5" x2="501.5" y2="490.5" stroke="#3f8f1f" stroke-width="1"/>
<line x1="506.5" y1="463.5" x2="506.5" y2="490.5" stroke="#3f8f1f" stroke-width="1"/>
<line x1="321.5" y1="496.5" x2="321.5" y2="522.5" stroke="#3f8f1f" stroke-width="1"/>
<line x1="326.5" y1="496.5" x2="326.5" y2="522.5" stroke="#3f8f1f" stroke-width="1"/>
<line x1="509.5" y1="496.5" x2="509.5" y2="522.5" stroke="#3f8f1f" stroke-width="1"/>
<line x1="514.5" y1="496.5" x2="514.5" y2="522.5" stroke="#3f8f1f" stroke-width="1"/>
<line x1="313.5" y1="528.5" x2="313.5" y2="554.5" stroke="#3f8f1f" stroke-width="1"/>
<line x1="318.5" y1="528.5" x2="318.5" y2="554.5" stroke="#3f8f1f" stroke-width="1"/>
<line x1="501.5" y1="528.5" x2="501.5" y2="554.5" stroke="#3f8f1f" stroke-width="1"/>
<line x1="506.5" y1="528.5" x2="506.5" y2="554.5" stroke="#3f8f1f" stroke-width="1"/>
<line x1="321.5" y1="560.5" x2="321.5" y2="587.5" stroke="#3f8f1f" stroke-width="1"/>
<line x1="326.5" y1="560.5" x2="326.5" y2="587.5" stroke="#3f8f1f" stroke-width="1"/>
<line x1="509.5" y1="560.5" x2="509.5" y2="587.5" stroke="#3f8f1f" stroke-width="1"/>
<line x1="514.5" y1="560.5" x2="514.5" y2="587.5" stroke="#3f8f1f" stroke-width="1"/>
<line x1="313.5" y1="593.5" x2="313.5" y2="620.5" stroke="#3f8f1f" stroke-width="1"/>
<line x1="318.5" y1="593.5" x2="318.5" y2="620.5" stroke="#3f8f1f" stroke-width="1"/>
<line x1="501.5" y1="593.5" x2="501.5" y2="620.5" stroke="#3f8f1f" stroke-width="1"/>
<line x1="506.5" y1="593.5" x2="506.5" y2="620.5" stroke="#3f8f1f" stroke-width="1"/>
<line x1="321.5" y1="626.5" x2="321.5" y2="652.5" stroke="#3f8f1f" stroke-width="1"/>
<line x1="326.5" y1="626.5" x2="326.5" y2="652.5" stroke="#3f8f1f" stroke-width="1"/>
<line x1="509.5" y1="626.5" x2="509.5" y2="652.5" stroke="#3f8f1f" stroke-width="1"/>
<line x1="514.5" y1="626.5" x2="514.5" y2="652.5" stroke="#3f8f1f" stroke-width="1"/>
<line x1="313.5" y1="658.5" x2="313.5" y2="685.5" stroke="#3f8f1f" stroke-width="1"/>
<line x1="318.5" y1="658.5" x2="318.5" y2="685.5" stroke="#3f8f1f" stroke-width="1"/>
<line x1="501.5" y1="658.5" x2="501.5" y2="685.5" stroke="#3f8f1f" stroke-width="1"/>
<line x1="506.5" y1="658.5" x2="506.5" y2="685.5" stroke="#3f8f1f" stroke-width="1"/>
<line x1="240.5" y1="262" x2="240.5" y2="695" stroke="#3f8f1f" stroke-width="1"/>
<line x1="580.5" y1="226" x2="580.5" y2="262" stroke="#1b6b3c" stroke-width="1"/>
<line x1="580.5" y1="262" x2="576.5" y2="700" stroke="#3f8f1f" stroke-width="1"/>
<line x1="608.5" y1="262" x2="603.5" y2="704" stroke="#3f8f1f" stroke-width="1"/>
<line x1="630.5" y1="262" x2="627.5" y2="701" stroke="#3f8f1f" stroke-width="1"/>
<polygon points="212.5,338.5 230,338.5 230,419.5 212.5,419.5" fill="none" stroke="#3f8f1f" stroke-width="1"/>
<line x1="172" y1="357.5" x2="231" y2="348" stroke="#3f8f1f" stroke-width="1" shape-rendering="geometricPrecision"/>
<line x1="172" y1="387.5" x2="231" y2="406" stroke="#3f8f1f" stroke-width="1" shape-rendering="geometricPrecision"/>
<rect x="216.5" y="419.5" width="14.0" height="112.0" fill="none" stroke="#000" stroke-width="1"/>
<line x1="172" y1="555.5" x2="231" y2="539.5" stroke="#3f8f1f" stroke-width="1" shape-rendering="geometricPrecision"/>
<line x1="172" y1="590" x2="231" y2="609" stroke="#3f8f1f" stroke-width="1" shape-rendering="geometricPrecision"/>
<polyline points="325.5,262 325.5,231.5 352.5,231.5 352.5,262" fill="none" stroke="#3f8f1f" stroke-width="1"/>
<text x="330" y="250" font-size="6.3" fill="#3f8f1f" text-anchor="start" font-family="'DejaVu Sans Mono','Liberation Mono',monospace" font-weight="bold">niche</text>
<text x="189" y="269.5" font-size="6.5" fill="#3f8f1f" text-anchor="start" font-family="'DejaVu Sans Mono','Liberation Mono',monospace" font-weight="bold">nurallère</text>
<polyline points="211,271.5 224,272.5 236,275.5" fill="none" stroke="#3f8f1f" stroke-width="1" shape-rendering="geometricPrecision"/>
<polyline points="313.7,755 171,755 171,201.5 514.5,201.5 514.5,261.5 230.5,261.5" fill="none" stroke="#000" stroke-width="3" stroke-linejoin="miter"/>
<polyline points="231,260 231,696.5" fill="none" stroke="#000" stroke-width="2"/>
<polyline points="230.5,695 583,695" fill="none" stroke="#000" stroke-width="3" stroke-linejoin="miter"/>
<line x1="514.5" y1="261.5" x2="589" y2="261.5" stroke="#000" stroke-width="1"/>
<polyline points="303,695 313.7,755" fill="none" stroke="#000" stroke-width="3" stroke-linejoin="miter"/>
<polyline points="393.7,695 383,755 627.5,755 620.5,694 621,647 622,603.5 584.5,603.5 583,695" fill="none" stroke="#000" stroke-width="3" stroke-linejoin="miter"/>
<polygon points="589.5,201.5 678,201.5 670,261.5 589.5,261.5" fill="none" stroke="#000" stroke-width="3" stroke-linejoin="miter"/>
<polyline points="589.5,261.5 589.5,279.5 585,537.5 623,537.5 627,279.5 589.5,279.5" fill="none" stroke="#000" stroke-width="3" stroke-linejoin="miter"/>
<polygon points="711,201.5 1114.5,201.5 1114.5,513.5 1293.5,513.5 1293.5,755 1164,755 1169,717.5 1257.5,717.5 1257.5,551.5 1114.5,551.5 1114.5,610 1054.5,610 1054.5,261.5 717.5,261.5" fill="none" stroke="#000" stroke-width="3" stroke-linejoin="miter"/>
<polygon points="958.5,695 1054.5,695 1054.5,669.5 1114.5,669.5 1114.5,725 1119,725 1123.5,755 955.5,755" fill="none" stroke="#000" stroke-width="3" stroke-linejoin="miter"/>
<polygon points="701.5,696 869,696 878.5,755 696.5,755" fill="none" stroke="#000" stroke-width="3" stroke-linejoin="miter"/>
<line x1="232.5" y1="263" x2="232.5" y2="694" stroke="#1b6b3c" stroke-width="1"/>
<line x1="678" y1="215.5" x2="712" y2="215.5" stroke="#000" stroke-width="1"/>
<line x1="678" y1="221.5" x2="712" y2="221.5" stroke="#000" stroke-width="1"/>
<line x1="311" y1="741.5" x2="386" y2="741.5" stroke="#000" stroke-width="1"/>
<line x1="311" y1="746.5" x2="386" y2="746.5" stroke="#000" stroke-width="1"/>
<line x1="627" y1="741.5" x2="698" y2="741.5" stroke="#000" stroke-width="1"/>
<line x1="627" y1="746.5" x2="698" y2="746.5" stroke="#000" stroke-width="1"/>
<line x1="878" y1="741.5" x2="957" y2="741.5" stroke="#000" stroke-width="1"/>
<line x1="878" y1="746.5" x2="957" y2="746.5" stroke="#000" stroke-width="1"/>
<line x1="1123" y1="741.5" x2="1165" y2="741.5" stroke="#000" stroke-width="1"/>
<line x1="1123" y1="746.5" x2="1165" y2="746.5" stroke="#000" stroke-width="1"/>
<line x1="303" y1="695" x2="394" y2="695" stroke="#4aa31f" stroke-width="2"/>
<line x1="314" y1="755" x2="383" y2="755" stroke="#4aa31f" stroke-width="3"/>
<line x1="300.5" y1="696" x2="300.5" y2="755" stroke="#3f8f1f" stroke-width="1"/>
<line x1="379.5" y1="696" x2="379.5" y2="755" stroke="#3f8f1f" stroke-width="1"/>
<rect x="590.5" y="299.5" width="19.0" height="67.0" fill="none" stroke="#000" stroke-width="1"/>
<rect x="1055.5" y="337.5" width="50.0" height="14.0" fill="none" stroke="#000" stroke-width="1"/>
<rect x="1017.5" y="417.5" width="37.0" height="144.0" fill="none" stroke="#000" stroke-width="1"/>
<rect x="1055.5" y="429.5" width="21.0" height="121.0" fill="none" stroke="#000" stroke-width="1"/>
<rect x="1257.5" y="608.5" width="27.0" height="48.0" fill="none" stroke="#000" stroke-width="1"/>
<polygon points="597,644.5 620,645.5 619,689 595.5,687" fill="none" stroke="#000" stroke-width="1" shape-rendering="geometricPrecision"/>
<line x1="584" y1="684.5" x2="592" y2="684.5" stroke="#000" stroke-width="1"/>
<polyline points="584,633 578,648 577.5,664" fill="none" stroke="#000" stroke-width="1" shape-rendering="geometricPrecision"/>
<line x1="170.5" y1="116" x2="170.5" y2="197" stroke="#000" stroke-width="1"/>
<line x1="514.5" y1="116" x2="514.5" y2="197" stroke="#000" stroke-width="1"/>
<line x1="589.5" y1="116" x2="589.5" y2="197" stroke="#000" stroke-width="1"/>
<line x1="1114.5" y1="116" x2="1114.5" y2="197" stroke="#000" stroke-width="1"/>
<line x1="677.5" y1="106" x2="677.5" y2="197" stroke="#000" stroke-width="1"/>
<line x1="710.5" y1="106" x2="710.5" y2="197" stroke="#000" stroke-width="1"/>
<line x1="171" y1="130.5" x2="677" y2="130.5" stroke="#000" stroke-width="1"/>
<line x1="711" y1="130.5" x2="1114" y2="130.5" stroke="#000" stroke-width="1"/>
<polygon points="171,130.5 184,127.8 184,133.2" fill="#000" stroke="#000" stroke-width="0.6" shape-rendering="geometricPrecision"/>
<polygon points="514,130.5 501,127.8 501,133.2" fill="#000" stroke="#000" stroke-width="0.6" shape-rendering="geometricPrecision"/>
<polygon points="515,130.5 528,127.8 528,133.2" fill="#000" stroke="#000" stroke-width="0.6" shape-rendering="geometricPrecision"/>
<polygon points="589,130.5 576,127.8 576,133.2" fill="#000" stroke="#000" stroke-width="0.6" shape-rendering="geometricPrecision"/>
<polygon points="590,130.5 603,127.8 603,133.2" fill="#000" stroke="#000" stroke-width="0.6" shape-rendering="geometricPrecision"/>
<polygon points="677,130.5 664,127.8 664,133.2" fill="#000" stroke="#000" stroke-width="0.6" shape-rendering="geometricPrecision"/>
<polygon points="711,130.5 724,127.8 724,133.2" fill="#000" stroke="#000" stroke-width="0.6" shape-rendering="geometricPrecision"/>
<polygon points="1114,130.5 1101,127.8 1101,133.2" fill="#000" stroke="#000" stroke-width="0.6" shape-rendering="geometricPrecision"/>
<rect x="326.0" y="122.80000000000001" width="34" height="14.5" fill="#fff"/>
<text transform="translate(343,134.4) scale(1.1,1)" font-size="15.2" fill="#000" text-anchor="middle" stroke="#fff" stroke-width="0.2" paint-order="fill stroke">4,57</text>
<rect x="538.0" y="122.80000000000001" width="28" height="14.5" fill="#fff"/>
<text transform="translate(552,134.4) scale(1.1,1)" font-size="15.2" fill="#000" text-anchor="middle" stroke="#fff" stroke-width="0.2" paint-order="fill stroke">1,00</text>
<rect x="619.0" y="122.80000000000001" width="28" height="14.5" fill="#fff"/>
<text transform="translate(633,134.4) scale(1.1,1)" font-size="15.2" fill="#000" text-anchor="middle" stroke="#fff" stroke-width="0.2" paint-order="fill stroke">1,17</text>
<rect x="895.0" y="122.80000000000001" width="34" height="14.5" fill="#fff"/>
<text transform="translate(912,134.4) scale(1.1,1)" font-size="15.2" fill="#000" text-anchor="middle" stroke="#fff" stroke-width="0.2" paint-order="fill stroke">5,38</text>
<text transform="translate(694,107.5) scale(1.1,1)" font-size="15.2" fill="#000" text-anchor="middle" stroke="#fff" stroke-width="0.2" paint-order="fill stroke">0,78</text>
<line x1="56" y1="201.5" x2="166" y2="201.5" stroke="#000" stroke-width="1"/>
<line x1="76" y1="261.5" x2="227" y2="261.5" stroke="#000" stroke-width="1"/>
<line x1="76" y1="695.5" x2="227" y2="695.5" stroke="#000" stroke-width="1"/>
<line x1="56" y1="755.5" x2="166" y2="755.5" stroke="#000" stroke-width="1"/>
<line x1="90.5" y1="262" x2="90.5" y2="471.5" stroke="#000" stroke-width="1"/>
<line x1="90.5" y1="484.5" x2="90.5" y2="695" stroke="#000" stroke-width="1"/>
<polygon points="90.5,262 87.8,275 93.2,275" fill="#000" stroke="#000" stroke-width="0.6" shape-rendering="geometricPrecision"/>
<polygon points="90.5,695 87.8,682 93.2,682" fill="#000" stroke="#000" stroke-width="0.6" shape-rendering="geometricPrecision"/>
<text transform="translate(90,482.40000000000003) scale(1.1,1)" font-size="15.2" fill="#000" text-anchor="middle" stroke="#fff" stroke-width="0.2" paint-order="fill stroke">5,77</text>
<line x1="231.5" y1="203" x2="231.5" y2="257" stroke="#000" stroke-width="1"/>
<line x1="232" y1="217.5" x2="588" y2="217.5" stroke="#000" stroke-width="1"/>
<polygon points="232,217.5 245,214.8 245,220.2" fill="#000" stroke="#000" stroke-width="0.6" shape-rendering="geometricPrecision"/>
<polygon points="588,217.5 575,214.8 575,220.2" fill="#000" stroke="#000" stroke-width="0.6" shape-rendering="geometricPrecision"/>
<rect x="393.5" y="210.0" width="33" height="14.5" fill="#fff"/>
<text transform="translate(410,221.6) scale(1.1,1)" font-size="15.2" fill="#000" text-anchor="middle" stroke="#fff" stroke-width="0.2" paint-order="fill stroke">4,77</text>
<line x1="231.5" y1="697" x2="231.5" y2="747" stroke="#000" stroke-width="1"/>
<line x1="583.5" y1="697" x2="583.5" y2="747" stroke="#123" stroke-width="1"/>
<line x1="232" y1="733.5" x2="583" y2="733.5" stroke="#000" stroke-width="1"/>
<polygon points="232,733.5 245,730.8 245,736.2" fill="#000" stroke="#000" stroke-width="0.6" shape-rendering="geometricPrecision"/>
<polygon points="583,733.5 570,730.8 570,736.2" fill="#000" stroke="#000" stroke-width="0.6" shape-rendering="geometricPrecision"/>
<rect x="390.5" y="725.8" width="34" height="14.5" fill="#fff"/>
<text transform="translate(407.5,737.4) scale(1.1,1)" font-size="15.2" fill="#000" text-anchor="middle" stroke="#fff" stroke-width="0.2" paint-order="fill stroke">4,69</text>
<line x1="1119" y1="201.5" x2="1352" y2="201.5" stroke="#000" stroke-width="1"/>
<line x1="1295" y1="513.5" x2="1353" y2="513.5" stroke="#000" stroke-width="1"/>
<line x1="1299" y1="755.5" x2="1353" y2="755.5" stroke="#000" stroke-width="1"/>
<line x1="1339.5" y1="202" x2="1339.5" y2="350.5" stroke="#000" stroke-width="1"/>
<line x1="1339.5" y1="363.5" x2="1339.5" y2="649" stroke="#000" stroke-width="1"/>
<line x1="1339.5" y1="662" x2="1339.5" y2="755" stroke="#000" stroke-width="1"/>
<polygon points="1339.5,202 1336.8,215 1342.2,215" fill="#000" stroke="#000" stroke-width="0.6" shape-rendering="geometricPrecision"/>
<polygon points="1339.5,513 1336.8,500 1342.2,500" fill="#000" stroke="#000" stroke-width="0.6" shape-rendering="geometricPrecision"/>
<polygon points="1339.5,514 1336.8,527 1342.2,527" fill="#000" stroke="#000" stroke-width="0.6" shape-rendering="geometricPrecision"/>
<polygon points="1339.5,755 1336.8,742 1342.2,742" fill="#000" stroke="#000" stroke-width="0.6" shape-rendering="geometricPrecision"/>
<text transform="translate(1339,361.8) scale(1.1,1)" font-size="15.2" fill="#000" text-anchor="middle" stroke="#fff" stroke-width="0.2" paint-order="fill stroke">4,15</text>
<text transform="translate(1340,660.6) scale(1.1,1)" font-size="15.2" fill="#000" text-anchor="middle" stroke="#fff" stroke-width="0.2" paint-order="fill stroke">3,22</text>
<line x1="240.5" y1="177" x2="240.5" y2="262" stroke="#3f8f1f" stroke-width="1" stroke-dasharray="7 3"/>
<line x1="589.5" y1="177" x2="589.5" y2="262" stroke="#3f8f1f" stroke-width="1" stroke-dasharray="7 3"/>
<line x1="400.5" y1="160" x2="400.5" y2="262" stroke="#3f8f1f" stroke-width="1" stroke-dasharray="7 3"/>
<line x1="434.5" y1="160" x2="434.5" y2="262" stroke="#3f8f1f" stroke-width="1" stroke-dasharray="7 3"/>
<line x1="405.5" y1="173" x2="405.5" y2="242" stroke="#3f8f1f" stroke-width="1" stroke-dasharray="7 3"/>
<line x1="428.5" y1="173" x2="428.5" y2="262" stroke="#3f8f1f" stroke-width="1" stroke-dasharray="7 3"/>
<line x1="241" y1="190.5" x2="405" y2="190.5" stroke="#3f8f1f" stroke-width="1" stroke-dasharray="7 3"/>
<line x1="435" y1="190.5" x2="589" y2="190.5" stroke="#3f8f1f" stroke-width="1" stroke-dasharray="7 3"/>
<line x1="401" y1="173.5" x2="434" y2="173.5" stroke="#3f8f1f" stroke-width="1"/>
<polygon points="241,190.5 254,187.8 254,193.2" fill="#3a9a1a" stroke="#3a9a1a" stroke-width="0.6" shape-rendering="geometricPrecision"/>
<polygon points="405,190.5 392,187.8 392,193.2" fill="#3a9a1a" stroke="#3a9a1a" stroke-width="0.6" shape-rendering="geometricPrecision"/>
<polygon points="435,190.5 448,187.8 448,193.2" fill="#3a9a1a" stroke="#3a9a1a" stroke-width="0.6" shape-rendering="geometricPrecision"/>
<polygon points="589,190.5 576,187.8 576,193.2" fill="#3a9a1a" stroke="#3a9a1a" stroke-width="0.6" shape-rendering="geometricPrecision"/>
<polygon points="401,173.5 412,170.8 412,176.2" fill="#3a9a1a" stroke="#3a9a1a" stroke-width="0.6" shape-rendering="geometricPrecision"/>
<polygon points="434,173.5 423,170.8 423,176.2" fill="#3a9a1a" stroke="#3a9a1a" stroke-width="0.6" shape-rendering="geometricPrecision"/>
<text transform="translate(302.5,185.4) scale(1.1,1)" font-size="15.2" fill="#3f8f1f" text-anchor="middle" stroke="#fff" stroke-width="0.2" paint-order="fill stroke">2,20</text>
<text transform="translate(422,161.6) scale(1.1,1)" font-size="15.2" fill="#3f8f1f" text-anchor="middle" stroke="#fff" stroke-width="0.2" paint-order="fill stroke">0,44</text>
<text transform="translate(523.5,185.4) scale(1.1,1)" font-size="15.2" fill="#3f8f1f" text-anchor="middle" stroke="#fff" stroke-width="0.2" paint-order="fill stroke">2,15</text>
<line x1="241" y1="240.5" x2="583" y2="240.5" stroke="#1b6b3c" stroke-width="1"/>
<polygon points="241,240.5 254,237.8 254,243.2" fill="#1b6b3c" stroke="#1b6b3c" stroke-width="0.6" shape-rendering="geometricPrecision"/>
<polygon points="580,240.5 567,237.8 567,243.2" fill="#1b6b3c" stroke="#1b6b3c" stroke-width="0.6" shape-rendering="geometricPrecision"/>
<rect x="359" y="233" width="35" height="14" fill="#fff"/>
<text transform="translate(376.5,245.2) scale(1.1,1)" font-size="15.2" fill="#245c40" text-anchor="middle" stroke="#fff" stroke-width="0.2" paint-order="fill stroke">4,53</text>
<polyline points="405.5,714 405.5,242 428.5,242 428.5,714 405.5,714" fill="none" stroke="#1b6b3c" stroke-width="2.6" stroke-linejoin="miter"/>
<polyline points="405.5,486.5 413.2,486.5 413.2,471.5 420.5,471.5 420.5,486.5 428.5,486.5" fill="none" stroke="#1b6b3c" stroke-width="2.6" stroke-linejoin="round"/>
<rect x="398.5" y="460" width="37.0" height="37.5" fill="none" stroke="#1b6b3c" stroke-width="1"/>
<rect x="410" y="458" width="14" height="4" fill="#fff"/><rect x="410" y="496" width="14" height="4" fill="#fff"/>
<text transform="translate(420,398) rotate(-90)" font-size="7.1" fill="#3f8f1f" font-family="DejaVu Sans Mono,Liberation Mono,monospace">poutre 300x300</text>
<text transform="translate(420,609) rotate(-90)" font-size="7.1" fill="#3f8f1f" font-family="DejaVu Sans Mono,Liberation Mono,monospace">poutre 300x300</text>
<rect x="403.5" y="687.5" width="29.0" height="9.0" fill="none" stroke="#3f8f1f" stroke-width="1"/>
<text x="406.5" y="693" font-size="4.6" fill="#5aa82a" text-anchor="start" font-family="'DejaVu Sans Mono','Liberation Mono',monospace">corbeau</text>
<line x1="436" y1="242.5" x2="470" y2="242.5" stroke="#1b6b3c" stroke-width="1" stroke-dasharray="6 3"/>
<line x1="456.5" y1="256" x2="456.5" y2="472" stroke="#1b6b3c" stroke-width="1" stroke-dasharray="6 3"/>
<polygon points="456.5,243 453.8,256 459.2,256" fill="#1b6b3c" stroke="#1b6b3c" stroke-width="0.6" shape-rendering="geometricPrecision"/>
<polygon points="456.5,485.5 453.8,472.5 459.2,472.5" fill="#1b6b3c" stroke="#1b6b3c" stroke-width="0.6" shape-rendering="geometricPrecision"/>
<line x1="425" y1="471.5" x2="460" y2="471.5" stroke="#1b6b3c" stroke-width="1" stroke-dasharray="6 3"/>
<line x1="433" y1="486.5" x2="470" y2="486.5" stroke="#1b6b3c" stroke-width="1" stroke-dasharray="6 3"/>
<polygon points="446.5,472.5 443.8,485.5 449.2,485.5" fill="#1b6b3c" stroke="#1b6b3c" stroke-width="0.6" shape-rendering="geometricPrecision"/>
<line x1="446.5" y1="486" x2="446.5" y2="700" stroke="#1b6b3c" stroke-width="1" stroke-dasharray="6 3"/>
<polygon points="446.5,712 443.8,699 449.2,699" fill="#1b6b3c" stroke="#1b6b3c" stroke-width="0.6" shape-rendering="geometricPrecision"/>
<line x1="429" y1="713.5" x2="460" y2="713.5" stroke="#1b6b3c" stroke-width="1" stroke-dasharray="6 3"/>
<line x1="428.5" y1="714" x2="428.5" y2="731" stroke="#1b6b3c" stroke-width="1" stroke-dasharray="6 3"/>
<line x1="431" y1="717.5" x2="583" y2="717.5" stroke="#1b6b3c" stroke-width="1" stroke-dasharray="6 3"/>
<polygon points="431,717.5 444,714.8 444,720.2" fill="#1b6b3c" stroke="#1b6b3c" stroke-width="0.6" shape-rendering="geometricPrecision"/>
<polygon points="583,717.5 570,714.8 570,720.2" fill="#1b6b3c" stroke="#1b6b3c" stroke-width="0.6" shape-rendering="geometricPrecision"/>
<text transform="translate(455,355) scale(1.1,1)" font-size="15.2" fill="#245c40" text-anchor="middle" stroke="#fff" stroke-width="0.2" paint-order="fill stroke">3,24</text>
<text transform="translate(451.5,595) scale(1.1,1)" font-size="15.2" fill="#245c40" text-anchor="middle" stroke="#fff" stroke-width="0.2" paint-order="fill stroke">3,23</text>
<rect x="488" y="703" width="34" height="13" fill="#fff"/>
<text transform="translate(505,715) scale(1.1,1)" font-size="15.2" fill="#245c40" text-anchor="middle" stroke="#fff" stroke-width="0.2" paint-order="fill stroke">2,06</text>
<polyline points="429.5,262.5 447.5,278.5 648,278.5 653,277" fill="none" stroke="#0808b4" stroke-width="1" shape-rendering="geometricPrecision"/>
<polyline points="429.5,267.5 445.5,282.5 648,282.5 653,278" fill="none" stroke="#0808b4" stroke-width="1" shape-rendering="geometricPrecision"/>
<line x1="447.5" y1="278.5" x2="445.5" y2="282.5" stroke="#0808b4" stroke-width="1" shape-rendering="geometricPrecision"/>
<circle cx="600" cy="270" r="7.5" fill="none" stroke="#0808b4" stroke-width="1" stroke-dasharray="7 2.5" shape-rendering="geometricPrecision"/>
<circle cx="617.5" cy="270" r="7.5" fill="none" stroke="#0808b4" stroke-width="1" stroke-dasharray="7 2.5" shape-rendering="geometricPrecision"/>
<circle cx="635" cy="270" r="7.5" fill="none" stroke="#0808b4" stroke-width="1" stroke-dasharray="7 2.5" shape-rendering="geometricPrecision"/>
<circle cx="652.5" cy="270" r="7.5" fill="none" stroke="#0808b4" stroke-width="1" stroke-dasharray="7 2.5" shape-rendering="geometricPrecision"/>
<line x1="635.5" y1="106" x2="635.5" y2="272" stroke="#0808b4" stroke-width="1" stroke-dasharray="9 4"/>
<line x1="651.5" y1="106" x2="651.5" y2="278" stroke="#0808b4" stroke-width="1" stroke-dasharray="9 4"/>
<polyline points="607,264.5 600.5,269.5 607,275" fill="none" stroke="#000" stroke-width="1" shape-rendering="geometricPrecision"/>
<polyline points="600.5,269.5 635.5,269.5 635.5,262" fill="none" stroke="#000" stroke-width="1"/>
<line x1="1017.5" y1="417.5" x2="1054.5" y2="417.5" stroke="#0808b4" stroke-width="1"/>
<rect x="1014.5" y="414.5" width="6.0" height="6.0" fill="#fff" stroke="#10109a" stroke-width="1"/>
<rect x="1032.5" y="414.5" width="6.0" height="6.0" fill="#fff" stroke="#10109a" stroke-width="1"/>
<rect x="1051.5" y="414.5" width="6.0" height="6.0" fill="#fff" stroke="#10109a" stroke-width="1"/>
<text x="650.5" y="377" font-size="9.2" fill="#3f8f1f" text-anchor="start" font-family="'DejaVu Sans Mono','Liberation Mono',monospace">solives 75x250</text>
<text x="650.5" y="396" font-size="9.2" fill="#3f8f1f" text-anchor="start" font-family="'DejaVu Sans Mono','Liberation Mono',monospace">entraxe 375 mm</text>
<text x="650.5" y="429" font-size="9.2" fill="#3f8f1f" text-anchor="start" font-family="'DejaVu Sans Mono','Liberation Mono',monospace">étrésillons L cumulées 450 par sections de 30</text>
<line x1="844" y1="367" x2="844" y2="387" stroke="#1b6b3c" stroke-width="2"/>
<line x1="844" y1="376.5" x2="851.5" y2="376.5" stroke="#1b6b3c" stroke-width="1"/>
<polyline points="844,386.5 847,386 850,384.5" fill="none" stroke="#1b6b3c" stroke-width="1" shape-rendering="geometricPrecision"/>
<rect x="843.5" y="386.5" width="3.5" height="3.0" fill="none" stroke="#1b6b3c" stroke-width="1"/>
<line x1="847" y1="389.5" x2="851" y2="389.5" stroke="#1b6b3c" stroke-width="1"/>
<text x="851.5" y="378" font-size="4.2" font-weight="bold" fill="#2a8a0a">tige filetée</text>
<text x="852" y="386.2" font-size="4.2" font-weight="bold" fill="#2a8a0a">fond entre solives 18mm</text>
<text x="851" y="391.2" font-size="4.2" font-weight="bold" fill="#2a8a0a">ECROU M10</text>
<line x1="204.5" y1="757" x2="204.5" y2="777" stroke="#000" stroke-width="1"/>
<line x1="314.5" y1="757" x2="314.5" y2="777" stroke="#000" stroke-width="1"/>
<line x1="382.5" y1="757" x2="382.5" y2="777" stroke="#000" stroke-width="1"/>
<line x1="589.5" y1="757" x2="589.5" y2="777" stroke="#000" stroke-width="1"/>
<line x1="608.5" y1="757" x2="608.5" y2="777" stroke="#000" stroke-width="1"/>
<line x1="627.5" y1="757" x2="627.5" y2="777" stroke="#000" stroke-width="1"/>
<line x1="696.5" y1="757" x2="696.5" y2="777" stroke="#000" stroke-width="1"/>
<line x1="715.5" y1="757" x2="715.5" y2="777" stroke="#000" stroke-width="1"/>
<line x1="741.5" y1="757" x2="741.5" y2="777" stroke="#000" stroke-width="1"/>
<line x1="768.5" y1="757" x2="768.5" y2="777" stroke="#000" stroke-width="1"/>
<line x1="878.5" y1="757" x2="878.5" y2="777" stroke="#000" stroke-width="1"/>
<line x1="170.5" y1="760" x2="170.5" y2="777" stroke="#000" stroke-width="1" stroke-dasharray="9 4"/>
<line x1="955.5" y1="760" x2="955.5" y2="777" stroke="#000" stroke-width="1" stroke-dasharray="9 4"/>
<line x1="1123.5" y1="760" x2="1123.5" y2="777" stroke="#000" stroke-width="1" stroke-dasharray="9 4"/>
<line x1="1163.5" y1="760" x2="1163.5" y2="777" stroke="#000" stroke-width="1" stroke-dasharray="9 4"/>
<line x1="1292.5" y1="760" x2="1292.5" y2="777" stroke="#000" stroke-width="1" stroke-dasharray="9 4"/>
<line x1="520" y1="684.5" x2="590" y2="684.5" stroke="#000" stroke-width="1"/>
<line x1="556.5" y1="648" x2="556.5" y2="720" stroke="#000" stroke-width="1"/>
<rect x="553.5" y="681.5" width="6.0" height="6.0" fill="none" stroke="#000" stroke-width="1"/>
</svg>
</div>
<div class="abs sb" style="left:1421px;top:106px;width:17px;height:671px;background:linear-gradient(90deg,#f1f0e9,#fdfdfa 60%,#f6f5f0)"></div>
<svg class="abs" style="left:1421px;top:106px" width="17" height="17" viewBox="0 0 17 17"><rect x=".5" y=".5" width="16" height="16" rx="2" fill="#c2d3fc" stroke="#fff"/><rect x="1.5" y="1.5" width="14" height="14" rx="1.5" fill="none" stroke="#b0c2f0"/><path d="M4 9.500l4-4 4 4" fill="none" stroke="#4d6185" stroke-width="2.2"/></svg>
<svg class="abs" style="left:1421px;top:760px" width="17" height="17" viewBox="0 0 17 17"><rect x=".5" y=".5" width="16" height="16" rx="2" fill="#c2d3fc" stroke="#fff"/><rect x="1.5" y="1.5" width="14" height="14" rx="1.5" fill="none" stroke="#b0c2f0"/><path d="M4 6.500l4 4 4-4" fill="none" stroke="#4d6185" stroke-width="2.2"/></svg>
<svg class="abs" style="left:1421px;top:507px" width="17" height="17" viewBox="0 0 17 17"><rect x=".5" y=".5" width="16" height="16" rx="2" fill="#c2d3fc" stroke="#fff"/><rect x="1.5" y="1.5" width="14" height="14" rx="1.5" fill="none" stroke="#b0c2f0"/><path d="M5 5.500h6M5 7.500h6M5 9.500h6M5 11.500h6" stroke="#8ea6de" stroke-width="1"/></svg>
<div class="abs" style="left:56px;top:777px;width:1364px;height:17px;background:#ece9d8"></div>
<svg class="abs" style="left:56px;top:778px" width="18" height="16" viewBox="0 0 18 16"><rect x=".5" y=".5" width="17" height="15" fill="#ece9d8" stroke="#fff"/><path d="M17.5 0v15.500h-17.5" fill="none" stroke="#aca899"/><path d="M5 4v8M12 4l-5 4 5 4z" fill="#000" stroke="#000" stroke-width="1.2"/></svg><svg class="abs" style="left:74px;top:778px" width="18" height="16" viewBox="0 0 18 16"><rect x=".5" y=".5" width="17" height="15" fill="#ece9d8" stroke="#fff"/><path d="M17.5 0v15.500h-17.5" fill="none" stroke="#aca899"/><path d="M11 4l-5 4 5 4z" fill="#000" stroke="#000" stroke-width="1.2"/></svg><svg class="abs" style="left:92px;top:778px" width="18" height="16" viewBox="0 0 18 16"><rect x=".5" y=".5" width="17" height="15" fill="#ece9d8" stroke="#fff"/><path d="M17.5 0v15.500h-17.5" fill="none" stroke="#aca899"/><path d="M7 4l5 4-5 4z" fill="#000" stroke="#000" stroke-width="1.2"/></svg><svg class="abs" style="left:110px;top:778px" width="18" height="16" viewBox="0 0 18 16"><rect x=".5" y=".5" width="17" height="15" fill="#ece9d8" stroke="#fff"/><path d="M17.5 0v15.500h-17.5" fill="none" stroke="#aca899"/><path d="M6 4l5 4-5 4zM13 4v8" fill="#000" stroke="#000" stroke-width="1.2"/></svg>
<svg class="abs" style="left:128px;top:777px" width="150" height="18" viewBox="0 0 150 18"><path d="M49 0.500h91l-6 15.500h-79z" fill="#ece9d8" stroke="#000"/><path d="M2 0l6 16.500h39l6-16.500z" fill="#fff" stroke="#000"/><path d="M3 0h49" stroke="#fff" stroke-width="2"/><text x="11" y="12.5" font-size="12" font-weight="bold" letter-spacing="-.3" font-family="Liberation Sans">Objet</text><text x="61" y="12.5" font-size="11.5" letter-spacing="-.55" font-family="Liberation Sans">Présentation1</text></svg>
<div class="abs" style="left:960px;top:777px;width:460px;height:17px;background:#f3f2ea"></div>
<svg class="abs" style="left:960px;top:777px" width="17" height="17" viewBox="0 0 17 17"><rect x=".5" y=".5" width="16" height="16" fill="#ece9d8" stroke="#fff"/><path d="M16.5 0v16.500h-16.5" fill="none" stroke="#716f64"/><path d="M10 4.500l-4 4 4 4z" fill="#000"/></svg>
<svg class="abs" style="left:1404px;top:777px" width="17" height="17" viewBox="0 0 17 17"><rect x=".5" y=".5" width="16" height="16" fill="#ece9d8" stroke="#fff"/><path d="M16.5 0v16.500h-16.5" fill="none" stroke="#716f64"/><path d="M7 4.500l4 4-4 4z" fill="#000"/></svg>
<div class="abs" style="left:1340px;top:777px;width:17px;height:17px;background:#ece9d8;border:1px solid;border-color:#fff #716f64 #716f64 #fff"></div>
<div class="abs" style="left:958px;top:777px;width:2px;height:17px;background:#716f64"></div>
<div class="abs" style="left:0;top:795px;width:1440px;height:2px;background:#404040"></div>
<div class="abs" style="left:0;top:797px;width:1440px;height:1px;background:#fff"></div>
<div id="cmd" class="abs"><div style="position:absolute;left:1px;top:1px">Commande:
Commande: Spécifiez le coin opposé:</div><div style="position:absolute;left:0;right:0;top:28px;height:1px;background:#aca899"></div><div style="position:absolute;left:1px;top:31px">Commande:</div></div>
<div class="abs" style="left:1421px;top:803px;width:17px;height:29px;background:#f6f5ef"></div>
<div class="abs" style="left:1421px;top:803px;width:17px;height:1px;background:#000"></div>
<svg class="abs" style="left:1421px;top:805px" width="17" height="13" viewBox="0 0 17 13"><rect x=".5" y=".5" width="16" height="12" rx="2" fill="#c2d3fc" stroke="#fff"/><path d="M4.5 8l4-3.5 4 3.5" fill="none" stroke="#4d6185" stroke-width="2"/></svg>
<svg class="abs" style="left:1421px;top:818px" width="17" height="13" viewBox="0 0 17 13"><rect x=".5" y=".5" width="16" height="12" rx="2" fill="#c2d3fc" stroke="#fff"/><path d="M4.5 5l4 3.5 4-3.5" fill="none" stroke="#4d6185" stroke-width="2"/></svg>
<div class="abs" style="left:1352px;top:833px;width:68px;height:14px;background:#f6f5ef"></div>
<svg class="abs" style="left:1352px;top:833px" width="16" height="14" viewBox="0 0 16 14"><rect x=".5" y=".5" width="15" height="13" fill="#ece9d8" stroke="#fff"/><path d="M15.5 0v13.500h-15.5" fill="none" stroke="#716f64"/><path d="M9.5 3.500l-3.5 3.5 3.5 3.500z" fill="#000"/></svg>
<svg class="abs" style="left:1368px;top:833px" width="16" height="14" viewBox="0 0 16 14"><rect x=".5" y=".5" width="15" height="13" fill="#ece9d8" stroke="#fff"/><path d="M15.5 0v13.500h-15.5" fill="none" stroke="#716f64"/><path d="" fill="#000"/></svg>
<svg class="abs" style="left:1404px;top:833px" width="16" height="14" viewBox="0 0 16 14"><rect x=".5" y=".5" width="15" height="13" fill="#ece9d8" stroke="#fff"/><path d="M15.5 0v13.500h-15.5" fill="none" stroke="#716f64"/><path d="M6.5 3.500l3.5 3.5-3.5 3.500z" fill="#000"/></svg>
<div class="abs" style="left:0;top:850px;width:1440px;height:1px;background:#c9c6b6"></div><div class="abs" style="left:0;top:851px;width:1440px;height:1px;background:#fff"></div>
<div id="status" class="abs">
<div class="stbtn on" style="left:10px;width:241px;border-color:#aca899 #fff #fff #aca899;padding-left:2px"><span style="transform:scaleX(.875)">-98882.38, 27110.89</span></div>
<div class="stbtn off" style="left:253px;width:40px"><span>RESOL</span></div>
<div class="stbtn off" style="left:295px;width:41px"><span>GRILLE</span></div>
<div class="stbtn on" style="left:338px;width:45px"><span>ORTHO</span></div>
<div class="stbtn off" style="left:384px;width:49px"><span>POLAIRE</span></div>
<div class="stbtn on" style="left:434px;width:57px"><span>ACCROBJ</span></div>
<div class="stbtn on" style="left:492px;width:74px"><span>EPAISSLIGNE</span></div>
<div class="stbtn on" style="left:567px;width:42px"><span>OBJET</span></div>
</div>
<div id="task" class="abs">
<div id="start" class="abs"><svg class="abs" style="left:10px;top:6px" width="22" height="20" viewBox="0 0 22 20"><path d="M2 3c3-2 5-1 8 0l-1.5 6c-3-1-5-2-8 0z" fill="#e8452c"/><path d="M11.5 3.500c3 1 5 2 8 0l-1.5 6c-3 2-5 1-8 0z" fill="#6fbf3a"/><path d="M0 10.500c3-2 5-1 8 0l-1.5 6c-3-1-5-2-8 0z" fill="#3a80e0"/><path d="M9.5 11c3 1 5 2 8 0l-1.5 6c-3 2-5 1-8 0z" fill="#f2c32a"/></svg><div class="abs t">démarrer</div></div>
<svg class="abs" style="left:147px;top:7px" width="16" height="16" viewBox="0 0 16 16"><rect x="5" y="1" width="10" height="8" fill="#fff" stroke="#8aa"/><path d="M5 1l5 4 5-4" fill="none" stroke="#8aa"/><circle cx="7" cy="9" r="5.5" fill="none" stroke="#2a5ad0" stroke-width="2.2"/><path d="M2 9h10" stroke="#2a5ad0" stroke-width="2"/><path d="M9 12h5v4h-5z" fill="#ece9d8"/><path d="M1 4c3-3 8-4 12-2" fill="none" stroke="#e8b020" stroke-width="1.2"/></svg>
<svg class="abs" style="left:171px;top:7px" width="16" height="16" viewBox="0 0 16 16"><circle cx="8" cy="8" r="7.5" fill="#e8402a"/><path d="M8 8l-6.5 3.700a7.5 7.5 0 0 0 7 3.800z" fill="#3aa84a"/><path d="M8 8l.5 7.500a7.5 7.5 0 0 0 6.5-11.200z" fill="#f2c32a"/><circle cx="8" cy="8" r="3.600" fill="#fff"/><circle cx="8" cy="8" r="2.8" fill="#3a7ae0"/></svg>
<svg class="abs" style="left:193px;top:7px" width="16" height="16" viewBox="0 0 16 16"><rect x=".5" y=".5" width="15" height="15" rx="2" fill="#f0a020" stroke="#fff3d0"/><circle cx="5.5" cy="10.5" r="2.5" fill="none" stroke="#fff" stroke-width="1.5"/><path d="M7.5 8.500l5.5-5.500M11 5l2 2M9.5 6.500l1.5 1.5" stroke="#fff" stroke-width="1.5"/></svg>
<svg class="abs" style="left:217px;top:7px" width="16" height="16" viewBox="0 0 16 16"><path d="M4 1h8l-1 10h-6z" fill="#8ab4f0" stroke="#dfe9ff"/><path d="M5.5 2.500h5l-.7 6h-3.600z" fill="#3a6ad0"/><path d="M3 14.500h10l-2-3h-6z" fill="#c8d4e8"/></svg>
<svg class="abs" style="left:239px;top:7px" width="16" height="16" viewBox="0 0 16 16"><rect x="3" y="1" width="10" height="14" rx="1" fill="#b8c4dc" stroke="#6a7a9a"/><rect x="4.5" y="2.5" width="7" height="3" fill="#e8f0ff"/><path d="M5 8h1.500M7.5 8h1.500M10 8h1.500M5 10.500h1.500M7.5 10.500h1.500M10 10.500h1.500M5 13h1.500M7.5 13h1.500M10 13h1.5" stroke="#4a5a7a" stroke-width="1.5"/></svg>
<svg class="abs" style="left:262px;top:7px" width="16" height="16" viewBox="0 0 16 16"><path d="M6 1h7l2.5 2.500v11.500h-9.500z" fill="#fff" stroke="#8a9ab8"/><rect x=".5" y="3.5" width="10" height="9" fill="#1a3a9a"/><text x="5.5" y="11" font-size="8.5" font-weight="bold" text-anchor="middle" fill="#fff" font-family="Liberation Sans">W</text></svg>
<svg class="abs" style="left:287px;top:7px" width="16" height="16" viewBox="0 0 16 16"><circle cx="8" cy="7.5" r="5.5" fill="none" stroke="#2a8ae8" stroke-width="2.5"/><path d="M9 10l3.5 5" stroke="#2a8ae8" stroke-width="2.5"/></svg>
<svg class="abs" style="left:309px;top:7px" width="16" height="16" viewBox="0 0 16 16"><circle cx="8" cy="8" r="7.5" fill="#e8ecf8" stroke="#9ab"/><circle cx="8" cy="8" r="5" fill="#2a5ad0"/><path d="M6.5 5l5 3-5 3z" fill="#fff"/><path d="M1 11a7.5 7.5 0 0 0 6 4.5" fill="none" stroke="#f08020" stroke-width="1.5"/><path d="M15 5a7.5 7.5 0 0 0-6-4.5" fill="none" stroke="#3aa84a" stroke-width="1.5"/></svg>
<div class="abs" style="left:337px;top:2px;color:#cfe0ff;font-size:11px;letter-spacing:-1px">»</div>
<div class="tk" style="left:355px;width:156px"><svg width="16" height="16" viewBox="0 0 16 16"><circle cx="8" cy="8" r="7.5" fill="#e8402a"/><path d="M8 8l-6.5 3.700a7.5 7.5 0 0 0 7 3.800z" fill="#3aa84a"/><path d="M8 8l.5 7.500a7.5 7.5 0 0 0 6.5-11.200z" fill="#f2c32a"/><circle cx="8" cy="8" r="3.600" fill="#fff"/><circle cx="8" cy="8" r="2.8" fill="#3a7ae0"/></svg><span class="t">Boîte de réception (4...</span></div>
<div class="tk" style="left:514px;width:156px"><svg width="16" height="16" viewBox="0 0 16 16"><circle cx="8" cy="8" r="7.5" fill="#e8402a"/><path d="M8 8l-6.5 3.700a7.5 7.5 0 0 0 7 3.800z" fill="#3aa84a"/><path d="M8 8l.5 7.500a7.5 7.5 0 0 0 6.5-11.200z" fill="#f2c32a"/><circle cx="8" cy="8" r="3.600" fill="#fff"/><circle cx="8" cy="8" r="2.8" fill="#3a7ae0"/></svg><span class="t">isolation plafond cave...</span></div>
<div class="tk" style="left:674px;width:156px"><svg width="16" height="16" viewBox="0 0 16 16"><circle cx="8" cy="8" r="7.5" fill="#e8402a"/><path d="M8 8l-6.5 3.700a7.5 7.5 0 0 0 7 3.800z" fill="#3aa84a"/><path d="M8 8l.5 7.500a7.5 7.5 0 0 0 6.5-11.200z" fill="#f2c32a"/><circle cx="8" cy="8" r="3.600" fill="#fff"/><circle cx="8" cy="8" r="2.8" fill="#3a7ae0"/></svg><span class="t">batiplac th 38 - Rech...</span></div>
<div class="tk" style="left:833px;width:156px"><svg width="16" height="16" viewBox="0 0 16 16"><path d="M1 3.500h5l1.5 1.500h7.500v8.500h-14z" fill="#f2d268" stroke="#a8842a"/><path d="M1 6.500h14" stroke="#fff5c0"/></svg><span class="t">C:\Documents and Se...</span></div>
<div class="tk act" style="left:993px;width:159px"><svg width="16" height="16" viewBox="0 0 16 16"><circle cx="8" cy="8" r="7.5" fill="#2a2a5a"/><path d="M2 10c2-6 5-7 9-8 2 1 3 4 3 6-2 4-5 6-8 6-2-1-3-2-4-4z" fill="#8a94c4"/><path d="M6 9l4-2 2 3-3 3-3-1z" fill="#3a3f86"/><path d="M3 11l3-2 1 3z" fill="#b0202a"/></svg><span class="t">AutoCAD LT - VERSI...</span></div>
<div class="abs" style="left:1330px;top:9px;color:#fff;font-size:11.5px;letter-spacing:-.3px">FR</div>
<div id="tray" class="abs"><svg class="abs" style="left:10px;top:7px" width="17" height="17" viewBox="0 0 17 17"><circle cx="8.5" cy="8.5" r="8" fill="#e8701a"/><circle cx="8.5" cy="8.5" r="8" fill="none" stroke="#b8400a"/><circle cx="8.5" cy="8.5" r="4.600" fill="#fff3e0"/><circle cx="8.8" cy="9" r="2.400" fill="#f28a1a"/><path d="M9.5 9l1.5 5" stroke="#f28a1a" stroke-width="2.5"/></svg><div class="abs" style="left:35px;top:9px;font-size:11.500px;letter-spacing:-.2px">15:43</div></div>
<svg class="abs" style="left:1357px;top:7px" width="18" height="18" viewBox="0 0 18 18"><circle cx="9" cy="9" r="8.5" fill="#2a72e6" stroke="#8ac0ff"/><path d="M10.5 5l-4 4 4 4" fill="none" stroke="#fff" stroke-width="2.2"/></svg>
</div>
</div>
</body>
</html>
